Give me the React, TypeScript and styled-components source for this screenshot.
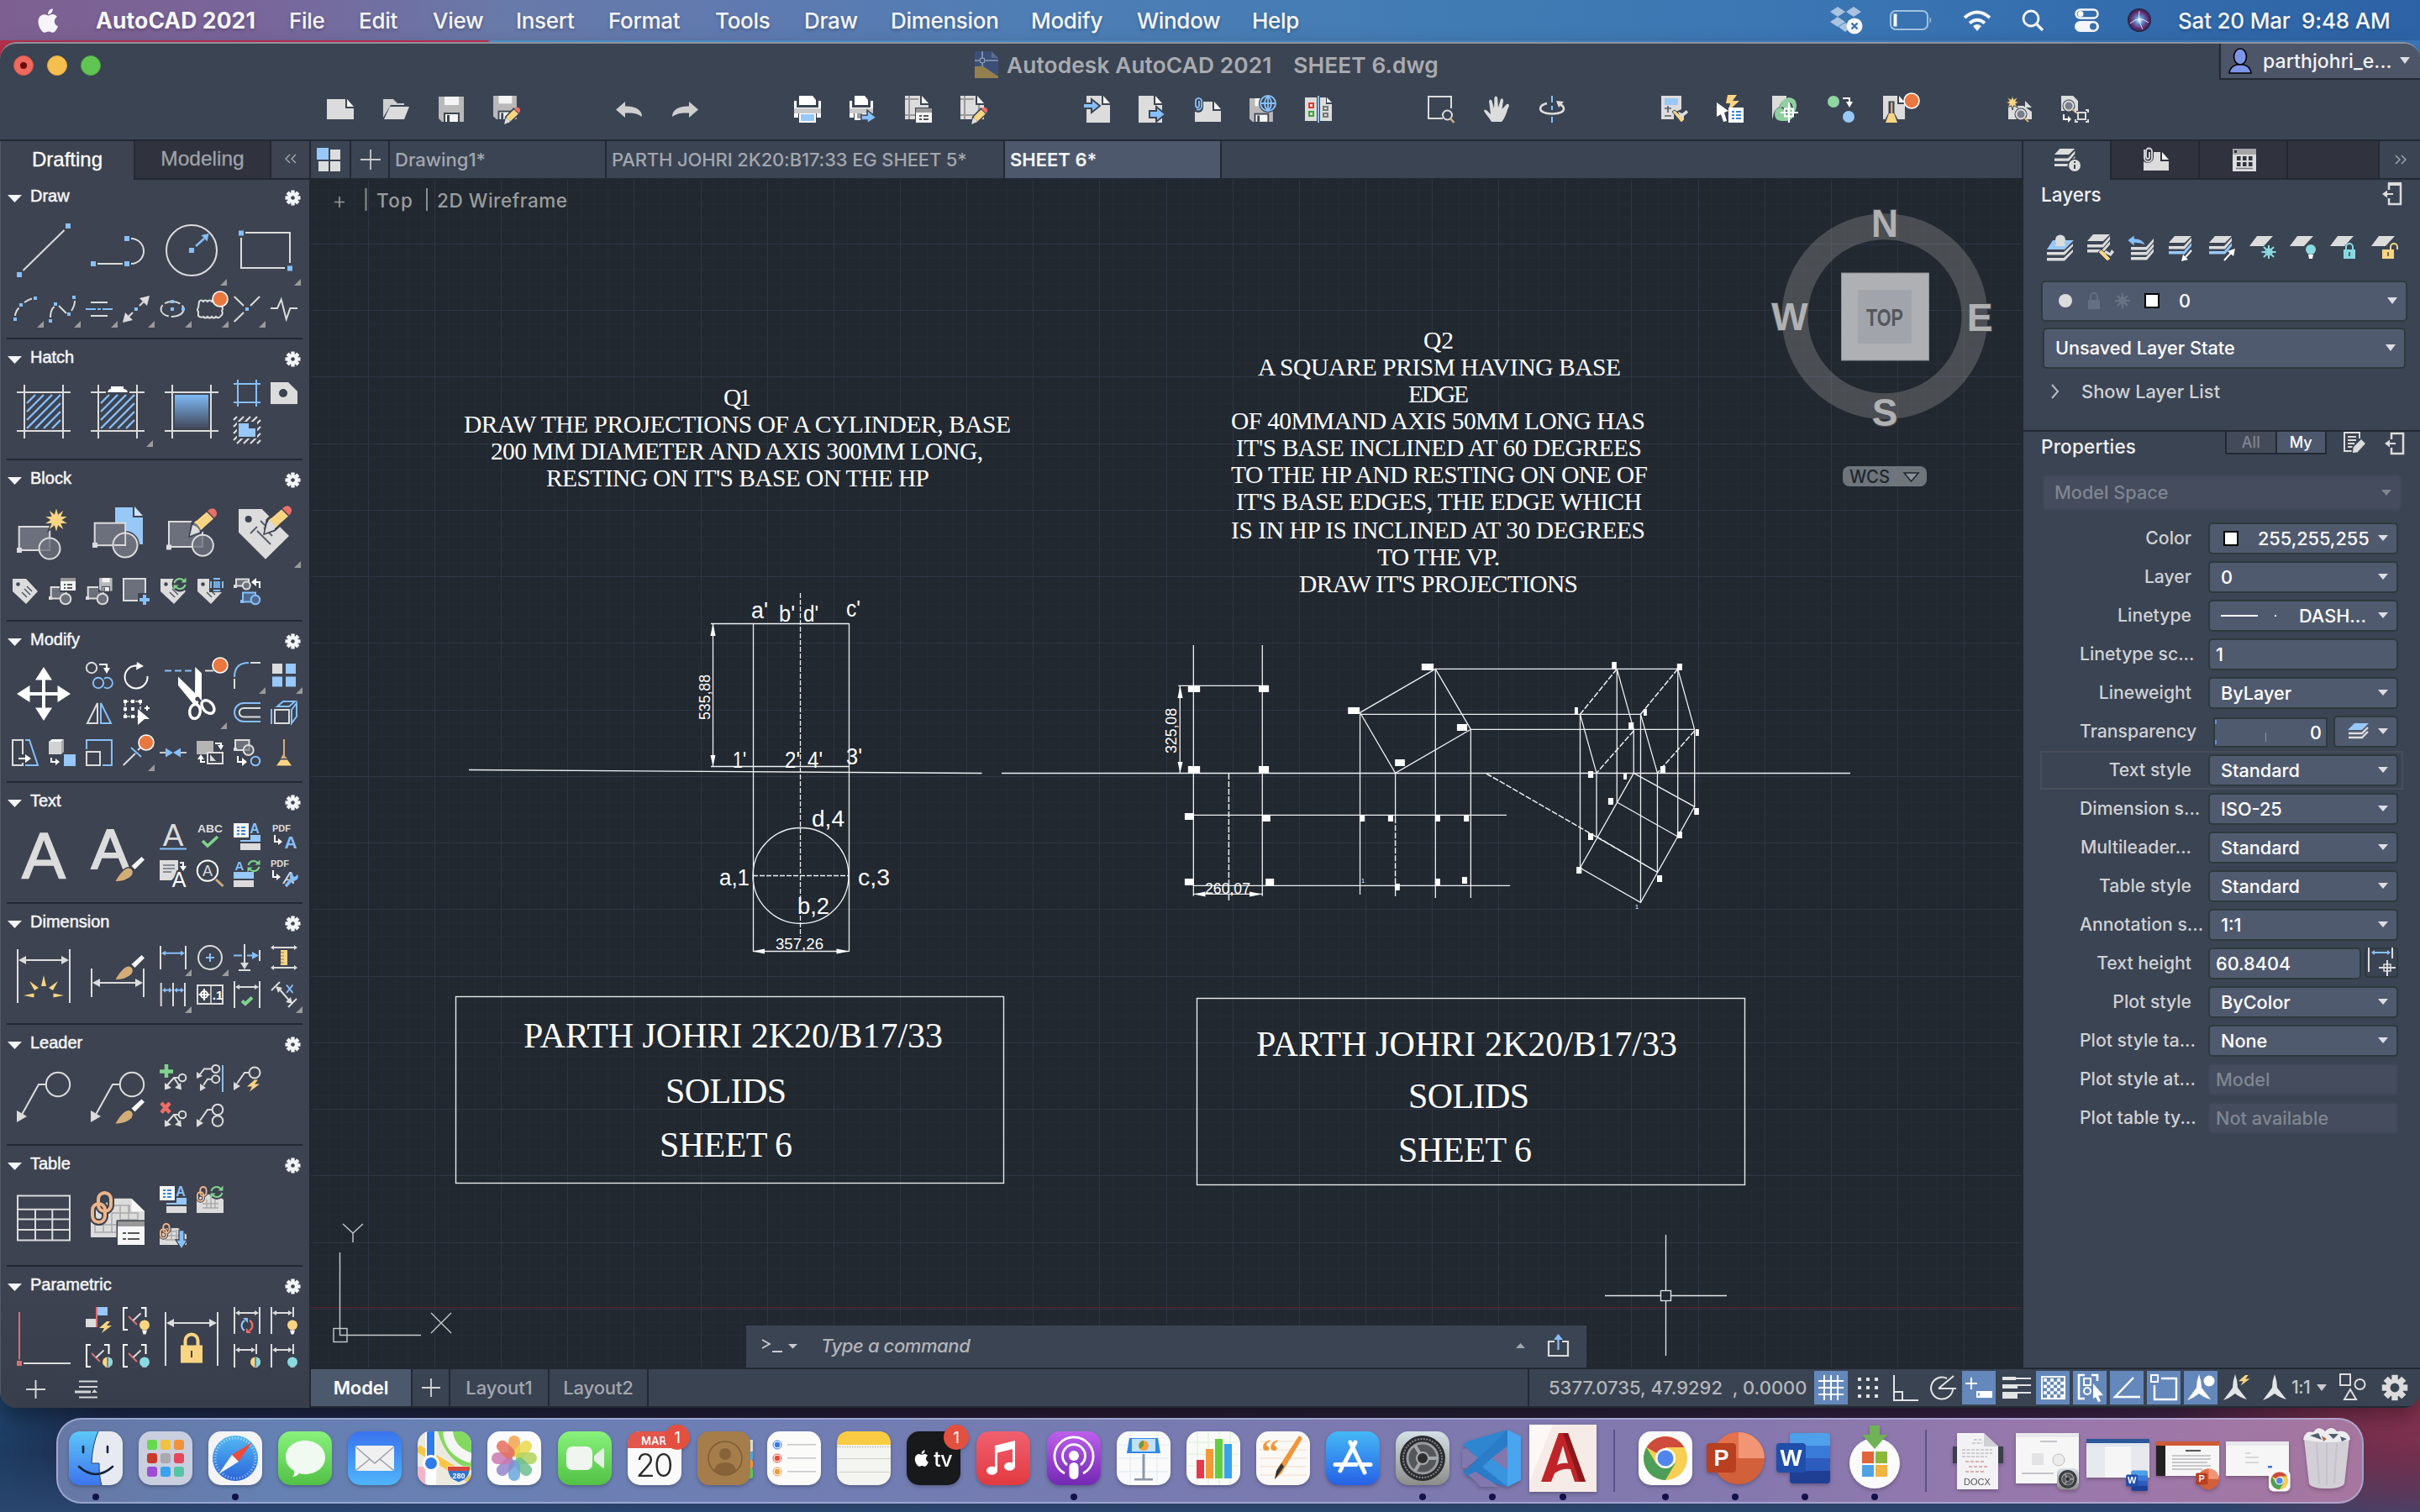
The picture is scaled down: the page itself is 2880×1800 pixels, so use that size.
import React from "react";
import styled, { createGlobalStyle } from "styled-components";

/* ---------- palette ---------- */
const G = "#dcdcdc";
const W = "#ffffff";
const BL = "#86bff9";
const LB = "#97c8f7";
const YE = "#f9d583";
const GR = "#7fd38c";
const OR = "#e97840";
const RD = "#ee6e68";
const CY = "#8ad9e0";
const TN = "#d3ad78";
const DK = "#3c4250";
const PALETTE = "#3d4350";
const PANEL = "#3b4453";
const EDGE = "#222933";
const ACTIVE = "#4e586d";
const UI = `Inter, "Liberation Sans", sans-serif`;
const ARIAL = `"Liberation Sans", Arial, sans-serif`;
const TIMES = `"Liberation Serif", "Times New Roman", serif`;

const GlobalStyle = createGlobalStyle`
  *, *::before, *::after { box-sizing: border-box; }
  html, body { margin: 0; padding: 0; }
  body { width: 2880px; height: 1800px; overflow: hidden; font-family: ${UI}; }
  svg { display: block; }
`;

/* ---------- drawing helpers ---------- */
type PathProps = { d: string; c?: string; w?: number; f?: string; dash?: string };
const P = ({ d, c = G, w = 2, f = "none", dash }: PathProps) => (
  <path d={d} stroke={c} strokeWidth={w} fill={f} strokeDasharray={dash} />
);
const F = ({ d, c = G }: { d: string; c?: string }) => <path d={d} fill={c} />;
const R = ({ x, y, w = 6, h, c = BL }: { x: number; y: number; w?: number; h?: number; c?: string }) => (
  <rect x={x} y={y} width={w} height={h ?? w} fill={c} />
);
const C = ({ x, y, r, c = "none", s, w = 2 }: { x: number; y: number; r: number; c?: string; s?: string; w?: number }) => (
  <circle cx={x} cy={y} r={r} fill={c} stroke={s} strokeWidth={s ? w : 0} />
);
const T = ({ x, y, s, c = G, b = 400, children, a = "start", i = false, l, ff = ARIAL }: any) => (
  <text x={x} y={y} fontSize={s} fill={c} fontWeight={b} textAnchor={a} fontFamily={ff} fontStyle={i ? "italic" : "normal"}
    textLength={l} lengthAdjust={l ? "spacingAndGlyphs" : undefined}>{children}</text>
);
const DimH = ({ x1, x2, y, c = G, h = 4, k = 3 }: any) => (
  <g>
    <P d={`M${x1 + h} ${y}H${x2 - h}`} c={c} />
    <F d={`M${x1} ${y}l${h} ${-k}v${2 * k}zM${x2} ${y}l${-h} ${-k}v${2 * k}z`} c={c} />
  </g>
);
const Badge = ({ x, y }: { x: number; y: number }) => <circle cx={x} cy={y} r={9} fill={OR} stroke={W} strokeWidth={1.6} />;
const Pencil = ({ t = "" }: { t?: string }) => (
  <g transform={t}>
    <path d="M30 36L33 20L49 4.500Q56 -1 62 5Q65 11 58 17L42 32Z" fill="none" stroke={PALETTE} strokeWidth={3} />
    <F d="M30 36L33 23Q40 24 42 31.500Z" c={G} />
    <F d="M35 20.500L50 7.500L58 15.500L43 29Q40 22 35 20.500Z" c={YE} />
    <F d="M51 6.500Q55 1.500 59.500 4Q65 9 59 14.500Z" c={RD} />
  </g>
);
const Brush = ({ t }: { t: string }) => (
  <g transform={t}>
    <path d="M28 64Q39 45 47 47Q53 50 49 57Q42 64 28 64Z" fill={TN} stroke={PALETTE} strokeWidth={1.500} />
    <F d="M48.500 45L60.500 34L64 37.500L52.500 49Z" c={"#f5f5f5"} />
  </g>
);
const Floppy = ({ t }: { t?: string }) => (
  <g transform={t}>
    <F d="M0 0H30V30H4L0 26Z" c="#b9b9b9" />
    <R x={7} y={0} w={17} h={10} c="#f4f4f4" />
    <R x={6} y={19} w={19} h={11} c={PANEL} />
    <R x={8} y={21} w={15} h={9} c="#f4f4f4" />
    <R x={10} y={22} w={3} h={8} c={PANEL} />
  </g>
);
const Refresh = ({ x, y, r = 6.5, c = GR, c2 }: any) => (
  <g>
    <P d={`M${x - r} ${y - 1}A${r} ${r} 0 0 1 ${x + r - 2} ${y - 4}`} c={c} />
    <F d={`M${x + r + 1} ${y - r - 1}v6h-6z`} c={c} />
    <P d={`M${x + r} ${y + 1}A${r} ${r} 0 0 1 ${x - r + 2} ${y + 4}`} c={c2 ?? c} />
    <F d={`M${x - r - 1} ${y + r + 1}v-6h6z`} c={c2 ?? c} />
  </g>
);
const Bolt = ({ t = "", c = YE }: any) => <path transform={t} d="M9 0L0 8H6L3 14L15 5H9L13 0Z" fill={c} />;
const ListCard = () => (
  <g>
    <R x={0} y={0} w={18} h={17} c="#f5f5f5" />
    <P d="M4 5H7M9 5H14M4 9H7M9 9H14M4 13H7M9 13H14" c="#3a80d8" w={2} />
  </g>
);
const Tag = () => (
  <g>
    <F d="M1 1H17L31 16L17 31L1 16Z" />
    <C x={7.5} y={7.500} r={2.200} c={DK} />
    <P d="M12 17L18 23M15 13L22 20M18 10L24 16" c="#555a66" w={1.500} />
  </g>
);
const Bulb = ({ x, y, c, half }: any) => (
  <g>
    <C x={x} y={y} r={6} c={c} />
    {half && <F d={`M${x} ${y - 6}A6 6 0 0 1 ${x} ${y + 6}Z`} c={CY} />}
    {half && <P d={`M${x} ${y - 6}V${y + 6}`} c={PALETTE} w={1} />}
    <F d={`M${x - 3} ${y + 6}h6l-1.500 5h-3z`} c="#f5f5f5" />
  </g>
);
const star = (cx: number, cy: number, R1: number, R2: number, n: number) =>
  Array.from({ length: n * 2 }, (_, i) => {
    const a = (Math.PI * i) / n - Math.PI / 2;
    const r = i % 2 ? R2 : R1;
    return `${(cx + r * Math.cos(a)).toFixed(1)},${(cy + r * Math.sin(a)).toFixed(1)}`;
  }).join(" ");
const LeaderTwin = () => (
  <g>
    <C x={27} y={15} r={4.300} s={G} />
    <P d="M22.500 15H17L9 24M17 15L23 24" />
    <F d="M6 29.500V21L14 27ZM26 29.500L18 27L25 21Z" />
  </g>
);
const Chain = ({ k = 1 }: { k?: number }) => (
  <g transform={`scale(${k})`} fill="none" strokeWidth={4}>
    <rect x={9} y={2} width={15} height={22} rx={7.500} stroke={PALETTE} strokeWidth={8} />
    <rect x={2} y={15} width={15} height={22} rx={7.500} stroke={PALETTE} strokeWidth={8} />
    <rect x={9} y={2} width={15} height={22} rx={7.500} stroke="#eeb58a" />
    <rect x={2} y={15} width={15} height={22} rx={7.500} stroke="#eeb58a" />
  </g>
);
const HatchFrame = () => <P d="M9 0V64M55 0V64M0 9H64M0 55H64" />;
const DiagFill = () => (
  <path
    d="M12 22L22 12M12 32L32 12M12 42L42 12M12 52L52 12M22 52L52 22M32 52L52 32M42 52L52 42"
    stroke={BL} strokeWidth={2.400} fill="none" />
);

/* ---------- palette tool icons (64 grid for large, 32 for small) ---------- */
const tools: Record<string, React.ReactNode> = {
  line: <><R x={0} y={58} /><R x={58} y={0} /><P d="M7.500 56L56.500 8" /></>,
  polyline: <><R x={0} y={45} /><R x={40} y={45} /><R x={40} y={15} /><P d="M8 48H38M48 18A15 15 0 0 1 48 48" /></>,
  circle: <><C x={32} y={32} r={30} s={G} /><R x={29} y={29} /><P d="M37 27L47 18" c={BL} w={2.500} /><F d="M52.500 12L50.500 21.500L43.500 14Z" c={BL} /></>,
  rect: <><R x={0} y={8.5} /><R x={58} y={50.5} /><P d="M8 11H61V47M3 17V53H55" /></>,
  arc: <><R x={2} y={26} w={4} /><R x={9} y={9} w={4} /><R x={26} y={1} w={4} /><P d="M4 24Q4.500 18.500 8.500 14.500M15 8Q20 4.500 24 3.500" /></>,
  spline: <><R x={0} y={28} w={4} /><R x={6} y={8} w={4} /><R x={22} y={20} w={4} /><R x={28} y={0} w={4} /><P d="M2 26Q2 17 6.500 13M12 12L21 21M27 18Q31 12 31 6" /></>,
  xline: <><P d="M6 8H26M6 24H26" /><P d="M0 16H12M14 16H18M20 16H32" c={BL} /></>,
  ray: <><P d="M6 26L12 20M20 12L26 6" /><F d="M0 32L3 20L12 29ZM32 0L29 12L20 3Z" /><R x={14} y={14} w={4} /></>,
  ellipse: <><ellipse cx={15} cy={16} rx={13.500} ry={9} fill="none" stroke={G} strokeWidth={2} strokeDasharray="19 3" /><R x={13} y={5} w={4} /><R x={13} y={14} w={4} /><R x={26} y={14} w={4} /></>,
  cloud: <><path d="M3 7q2.500-3 5 0q2.500-3 5 0q2.500-3 5 0q2.500-3 5 0q3-3 7 1v5q2 2 0 5q2 3-1 6q-3 4-6 1q-2.500 3-5 0q-2.500 3-5 0q-2.500 3-5 0q-3 2-6-1v-5q-2-2 0-5z" fill="none" stroke={G} strokeWidth={2} /><Badge x={28} y={4} /></>,
  point: <><P d="M.700 1L12 12M20 12L31 1M.700 31L12 20" /><R x={14} y={14} w={4} /></>,
  helix: <P d="M0 15H8L12.700 4.500L18.700 28L23.300 15H32" />,

  hatch: <><HatchFrame /><DiagFill /></>,
  hatchEdit: <><HatchFrame /><DiagFill /><rect x={18} y={6} width={28} height={5} fill={PALETTE} /><F d="M20 9Q21 5 24 5V2H39V5Q43 5 44 9Z" c={W} /></>,
  gradient: <><HatchFrame /><defs><linearGradient id="gh" x1="0" y1="0" x2="0" y2="1"><stop offset="0" stopColor="#7db9f5" /><stop offset="1" stopColor="#42485a" /></linearGradient></defs><rect x={12} y={12} width={40} height={40} fill="url(#gh)" /></>,
  boundary: <P d="M5 0V32M27 0V32M0 5H32M0 27H32" c={BL} />,
  wipeout: <><F d="M0 3H21L32 14V29H0Z" /><C x={15} y={16} r={5} c={DK} /></>,
  region: <><path d="M0 4L4 0M0 12L12 0M0 20L20 0M0 28L28 0M4 32L32 4M12 32L32 12M20 32L32 20M28 32L32 28" stroke={G} strokeWidth={2.200} /><rect x={4} y={6} width={24} height={20} fill={PALETTE} /><F d="M6 8H18V14H26V24H6Z" c={LB} /></>,

  createBlock: <><rect x={2.700} y={25} width={36.500} height={28} fill="#6c707c" stroke={G} strokeWidth={2} /><R x={0} y={50} c={G} /><C x={39} y={51} r={12.500} c="#6c707ccc" s={G} /><polygon points={star(47, 17, 16.5, 8, 10)} fill={YE} stroke={PALETTE} strokeWidth={1.500} /></>,
  insertBlock: <><F d="M29 2H51L62 13V46H29Z" c={LB} /><F d="M52 1L62 12H52Z" c="#cfe3f7" /><path d="M51 2V13H62" fill="none" stroke={PALETTE} strokeWidth={2} /><C x={41} y={47} r={17} c={PALETTE} /><rect x={4.700} y={20.700} width={36.500} height={26.500} fill="#6c707c" stroke={G} strokeWidth={2} /><R x={2} y={44} c={G} /><C x={41} y={47} r={14.500} c="#6c707c" s={G} /><P d="M41.200 33V47H28" w={1.800} /></>,
  editBlock: <><rect x={5} y={19} width={40} height={30} fill="#6c707c" stroke={G} strokeWidth={2} /><R x={2} y={46.5} c={G} /><C x={45.3} y={47.2} r={12.5} c="#6c707ccc" s={G} /><Pencil /></>,
  editAttr: <><F d="M0 4H27.700L60 36L32 63.700L0 31.700Z" /><C x={11.7} y={16} r={4} c={DK} /><P d="M14 33L22 25M22 30L38 46M30 26L40 36M26 18L34 26" c="#5a5f6b" w={2} /><Pencil t="translate(1 -3)" /></>,
  tag: <Tag />,
  blockList: <><rect x={2.700} y={11} width={18} height={13.500} fill="#6c707c" stroke={G} strokeWidth={2} /><R x={0} y={22} w={4} c={G} /><C x={20} y={25} r={6.3} c="#6c707c" s={G} /><rect x={13} y={0} width={20} height={17} fill={PALETTE} /><R x={14} y={0} w={18} h={15} c="#f5f5f5" /><R x={14} y={0} w={18} h={4} c="#999" /><P d="M18 8H20M22 8H28M18 12H20M22 12H28" c="#555" /></>,
  blockSave: <><rect x={2.700} y={11} width={18} height={13.500} fill="#6c707c" stroke={G} strokeWidth={2} /><R x={0} y={22} w={4} c={G} /><C x={20} y={25} r={6.3} c="#6c707c" s={G} /><rect x={15} y={0} width={18} height={17} fill={PALETTE} /><Floppy t="translate(16 0) scale(.520)" /></>,
  blockAdd: <><rect x={1} y={1} width={26} height={26} fill="#6c707c" stroke={G} strokeWidth={2} /><rect x={18} y={18} width={16} height={16} fill={PALETTE} /><P d="M26 20V32M20 26H32" c={BL} w={4} /></>,
  tagSync: <><Tag /><C x={24} y={7} r={9.500} c={PALETTE} /><Refresh x={24} y={7} /></>,
  tagArea: <><Tag /><R x={15} y={-1} w={18} h={18} c={PALETTE} /><R x={20} y={4} w={8} h={8} c="#6fa8e0" /><P d="M20 1H28M20 15H28M17 4V12M31 4V12" c={BL} /></>,
  blockSwap: <><rect x={3} y={1.500} width={15} height={8} fill="#6c707c" stroke={G} strokeWidth={2} /><R x={0} y={8} w={4} c={G} /><C x={15.3} y={9} r={4.500} c="#6c707c" s={G} /><P d="M31 12V5H26" c={W} /><F d="M21 5L27 0V10Z" c={W} /><rect x={11} y={17.500} width={15} height={11} fill="#4f6a90" stroke={BL} strokeWidth={2} /><R x={8} y={26} w={4} /><C x={26} y={26} r={5.3} c="#4f6a90" s={BL} /></>,

  move: <><R x={30} y={12} w={4} h={40} c={W} /><R x={12} y={30} w={40} h={4} c={W} /><F d="M32 0L42 15.500H22ZM32 64L42 48.500H22ZM0 32L15.500 22V42ZM64 32L48.500 22V42Z" c={W} /></>,
  copy: <><C x={7} y={7} r={6.200} s={G} /><P d="M16 3H25V8" c={W} /><F d="M25 14L21 7H29Z" c={W} /><C x={15} y={25} r={6.2} s={BL} /><P d="M22 20A6.200 6.200 0 1 1 22 30" c={BL} /></>,
  rotate: <><P d="M29.500 17A13.500 13.500 0 1 1 17 4.500" c={W} /><F d="M17 0L25 5L16 9.500Z" c={W} /></>,
  mirror: <><P d="M14 5V29H2Z" /><P d="M18 5V29H30Z" c={BL} /></>,
  pick: <><P d="M3 3H21V21H3Z" c={G} dash="4 2" w={1.600} /><R x={1} y={1} w={4} c={W} /><R x={10} y={1} w={4} c={W} /><R x={19} y={1} w={4} c={W} /><R x={1} y={10} w={4} c={W} /><R x={10} y={10} w={4} c={W} /><R x={1} y={19} w={4} c={W} /><R x={10} y={19} w={4} c={W} /><F d="M18 12L32 24H26L18 31Z" c={W} /><P d="M29 8V14M26 11H32" c={W} /></>,
  trim: <><P d="M0 4.500H8M12 4.500H20M24 4.500H32" c={BL} /><P d="M48 4.500H58" /><F d="M36.300 0L44 7.500V40L36 33Z" c={W} /><F d="M16 11.500L40 35V44H34L16 22Z" c={W} /><ellipse cx={36} cy={53} rx={6.300} ry={8.500} fill="none" stroke={W} strokeWidth={3.400} transform="rotate(8 36 53)" /><ellipse cx={51.500} cy={47.500} rx={6} ry={9} fill="none" stroke={W} strokeWidth={3.400} transform="rotate(-42 51.500 47.500)" /><C x={39} y={38} r={2.600} c={DK} /><Badge x={66} y={-2} /></>,
  fillet: <><P d="M1 18Q1 1 18 1" c={BL} /><P d="M20 1H32M1 20V32" c={G} /></>,
  array: <><R x={2} y={2} w={12} c={G} /><R x={18} y={2} w={12} c={LB} /><R x={2} y={17.5} w={12} c={LB} /><R x={18} y={17.5} w={12} c={LB} /></>,
  offset: <><P d="M32 5H12A11 11 0 0 0 12 27H32" c={BL} /><P d="M32 11H12A5 5 0 0 0 12 21.500H32" /></>,
  box: <><rect x={5} y={13} width={17} height={16} fill="none" stroke={G} strokeWidth={2} /><P d="M1 12V30" c={BL} /><P d="M8 9L15 3H29L22 9ZM25 13L31 5V21L25 29Z" c={BL} /></>,
  stretch: <><P d="M13 18V1H1V31H13V28" /><P d="M8 23H18" c={W} /><F d="M23 23L16 18V28Z" c={W} /><P d="M16 1H21L31 31H16" c={BL} /></>,
  explode: <><F d="M0 3L4 0H18L15 3Z" c="#f5f5f5" /><R x={0} y={3} w={15} h={15} c="#d2d2d2" /><F d="M15 3L18 0V15L15 18Z" c="#aaa" /><R x={18} y={18} w={14} c={LB} /><P d="M3 22V27H8" c={W} /><F d="M13 27L8 23V31Z" c={W} /></>,
  scale: <><P d="M1 12V1H31V31H20" c={BL} /><rect x={1} y={15} width={16} height={16} fill="none" stroke={G} strokeWidth={2} /></>,
  breakAt: <><P d="M.700 31L15 17M18 13L22 9" /><P d="M10 10L22 21" c={BL} /><Badge x={28} y={4} /></>,
  join: <><P d="M0 16H32" c="#c9c9c9" /><R x={14} y={10} w={4} h={12} c={PALETTE} /><F d="M7 10.500L16 16L7 21.500ZM25 10.500L16 16L25 21.500Z" c={BL} /></>,
  layerUp: <><R x={0} y={2} w={20} h={16} c="#b5b5b5" /><rect x={12} y={15} width={20} height={15} fill={PALETTE} /><rect x={13} y={16} width={18} height={13} fill="none" stroke={G} strokeWidth={2} /><F d="M16 18L23 26H16Z" /><P d="M22 5H29V8" c={W} /><F d="M29 13L25 7H32Z" c={W} /><P d="M10 27H5V24" c={W} /><F d="M5 18L1 24H9Z" c={W} /></>,
  blockConv: <><rect x={2} y={1} width={16.500} height={12} fill="#6c707c" stroke={G} strokeWidth={2} /><R x={0} y={10} w={4} c={G} /><C x={17.700} y={13} r={6} c="#6c707caa" s={G} /><P d="M5 20V27H11" c={W} /><F d="M16 27L10 22V32Z" c={W} /><C x={26} y={26} r={5.300} s={BL} /></>,
  purge: <><R x={15} y={0} w={2} h={21} c={TN} /><F d="M15 18L20 23H12Z" c={TN} /><F d="M12 24.500H20L25 31.500H7Z" c={YE} /></>,

  textA: <T x={32} y={60} s={78} c={G} a="middle"><tspan stroke={G} strokeWidth={1.500}>A</tspan></T>,
  textBrush: <><T x={23} y={48} s={67} a="middle"><tspan stroke={G} strokeWidth={2}>A</tspan></T><Brush t="translate(0 0)" /></>,
  textLine: <><T x={16} y={27} s={37} a="middle">A</T><R x={0} y={29.5} w={32} h={2} /></>,
  spell: <><T x={16} y={11} s={13} b={700} a="middle" l={30}>ABC</T><P d="M7 21L13 27L25 16" c={GR} w={3.600} /></>,
  textStyle: <><ListCard /><T x={25} y={12} s={16} c={BL} b={700} a="middle">A</T><R x={8} y={20} w={24} h={2} c={LB} /><R x={20} y={14} w={12} h={8} c={LB} /><R x={8} y={24} w={24} h={8} c={G} /></>,
  pdfText: <><T x={2} y={10} s={11} b={700} l={22}>PDF</T><P d="M5 14V22H10" c={W} /><F d="M14 22L9 18V26Z" c={W} /><T x={24} y={30} s={21} c={BL} b={700} a="middle">A</T></>,
  textNote: <><F d="M0 0H22V16L14 24H0Z" /><P d="M4 6H18M4 10H18M4 14H14" c="#6c707c" w={1.600} /><P d="M24 3H28V8" c={W} /><F d="M28 13L24 7H32Z" c={W} /><T x={23} y={32} s={25} c={PALETTE} a="middle"><tspan stroke={PALETTE} strokeWidth={4}>A</tspan></T><T x={23} y={32} s={25} c={W} a="middle">A</T></>,
  find: <><C x={13} y={12.6} r={12.2} s={W} /><T x={13} y={19} s={18} a="middle">A</T><P d="M23 23L31.500 31" c={TN} w={3} /></>,
  textSync: <><T x={7} y={11.500} s={15} c={BL} b={700} a="middle">A</T><Refresh x={24} y={7} /><R x={0} y={14} w={24} h={8} c={LB} /><R x={0} y={24} w={24} h={8} c={G} /></>,
  pdfTool: <><T x={0} y={8} s={11} b={700} l={22}>PDF</T><P d="M3 12V20H8" c={W} /><F d="M12 20L7 16V24Z" c={W} /><T x={22} y={28} s={21} a="middle" i>A</T><P d="M18 31L28 20" c={BL} w={3.600} /><F d="M32 17A5 5 0 1 1 26 15L27 19L29 20Z" c={BL} /></>,

  dimAuto: <><P d="M1 0V64M63 0V64" /><DimH x1={2} x2={62} y={13} h={9} k={5} /><F d="M32 31L35 44H29ZM15 38L26 46L21 49ZM49 38L38 46L43 49ZM8 55L20.500 52.500V57.500ZM56 55L43.500 52.500V57.500Z" c={YE} /></>,
  dimBrush: <><P d="M1 23V57M63 23V57" /><DimH x1={2} x2={62} y={40} h={9} k={5} /><Brush t="translate(0 -27)" /></>,
  dimLinear: <><P d="M1 2V30M31 2V30" /><DimH x1={2} x2={30} y={10.700} c={BL} h={5} /></>,
  dimCircle: <><C x={16} y={16} r={14} s={G} /><P d="M16 11V21M11 16H21" c={BL} /></>,
  dimOrd: <><P d="M13 0V22M6 31H20" /><F d="M13 30L8 22H18Z" /><P d="M0 13.500H10M16 13.500H24" c={BL} /><F d="M30 13.500L22 9V18Z" c={BL} /><P d="M31 7V20" /></>,
  dimRuler: <><DimH x1={0} x2={32} y={4} /><DimH x1={0} x2={32} y={28} /><R x={12} y={7} w={8} h={18} c={YE} /><P d="M12 10H16M12 14H16M12 18H16M12 22H16" c="#8a7a50" w={1.200} /></>,
  dimCont: <><P d="M1.700 2V30M16 2V30M30 2V30" /><DimH x1={3} x2={15} y={10.700} c={BL} h={4} /><DimH x1={17} x2={29} y={10.700} c={BL} h={4} /></>,
  tolerance: <><rect x={1} y={5} width={30} height={22} fill="none" stroke={G} strokeWidth={2} /><P d="M17 5V27" w={1.500} /><C x={9} y={16} r={4} s={W} /><P d="M9 9V23M2.500 16H15.500" c={W} /><T x={25} y={22} s={15} c={W} b={700} a="middle">.1</T></>,
  dimCheck: <><P d="M1 0V32M31 0V32" /><DimH x1={2} x2={30} y={7} h={5} /><P d="M10 23.500L14 27L22 19.500" c={GR} w={4} /></>,
  dimSpace: <><P d="M1 11L11 1M21 31L31 21" /><P d="M10 9L23 24" /><F d="M6 6L14 8L9 14ZM26 27L18 25L24 19Z" /><P d="M19 4.500L26.500 14M26.500 4.500L19 14" c={BL} /></>,

  leader: <><C x={49} y={17} r={14.2} s={G} /><P d="M35 17H26L6.500 52" /><F d="M0 62V48L12 55Z" /></>,
  leaderBrush: <><C x={49} y={17} r={14.2} s={G} /><P d="M35 17H26L6.500 52" /><F d="M0 62V48L12 55Z" /><Brush t="translate(0 .500)" /></>,
  leaderAdd: <><P d="M8 -1V15M0 7.500H16" c={GR} w={4.500} /><LeaderTwin /></>,
  leaderAlign: <><C x={22.700} y={4.500} r={4.500} s={G} /><C x={22.700} y={16.700} r={4.500} s={G} /><P d="M18 4.500H9L4 11M18 16.700H13L8 24" /><F d="M0 16V8L7 13ZM4 31V22L11 27Z" /><P d="M31 0V32" c={BL} /></>,
  leaderBolt: <><C x={25} y={9} r={6.500} s={G} /><P d="M18.500 9H13L4 22" /><F d="M0 30V20L8 25Z" /><Bolt t="translate(16 17.500)" /></>,
  leaderDel: <><P d="M2 1L12 12.500M12 1L2 12.500" c={RD} w={4.500} /><LeaderTwin /></>,
  leaderCollect: <><C x={25} y={9} r={6.300} s={G} /><C x={25} y={22.500} r={6.300} s={G} /><P d="M18.500 9H13L4 22" /><F d="M0 30V20L8 25Z" /></>,

  table: <><rect x={1} y={5.500} width={62} height={53} fill="none" stroke={G} strokeWidth={2} /><P d="M1 21.700H63M1 33.600H63M1 46H63M22 21.700V58.500M42.300 21.700V58.500" /></>,
  dataLink: <><F d="M0 24L28 8.700H48L64 24V55H0Z" /><F d="M48.700 8.700L64 24H48.700Z" c="#f7f7f7" /><P d="M5 35V49H36M15 40V49M5 40H40M25 26V49M35 17V36M45 17V36M25 17H46V26M25 26H56V34M35 34H56" c="#a9a9a9" w={1.500} /><Chain /><rect x={30.500} y={34.500} width={35} height={31} fill={PALETTE} /><R x={32} y={36} w={32} h={28} c="#f7f7f7" /><R x={32} y={36} w={32} h={6} c="#999" /><P d="M38 50H42M44 50H58M38 57H42M44 57H58" c="#555" w={2} /></>,
  linkSync: <><F d="M0 16L8 10H22L32 16V32H0Z" /><P d="M7 26H26M7 21H26M12 16V26M17 14V26M22 16V26" c="#a9a9a9" w={1.400} /><Chain k={0.480} /><C x={24} y={7} r={9} c={PALETTE} /><Refresh x={24} y={7} /></>,
  linkDown: <><F d="M0 16L8 6H22L32 14V26H0Z" /><P d="M7 20H24M7 15H24M7 10H20M14 6V20M20 8V20" c="#a9a9a9" w={1.400} /><Chain k={0.480} /><path d="M23 8.500H29V20H33L26 31L19 20H23Z" fill={BL} stroke={PALETTE} strokeWidth={1.300} /></>,

  perp: <><P d="M3 0V56.500" c="#d97078" /><R x={0} y={58} c="#d97078" /><P d="M8 61H64" /></>,
  autoCon: <><R x={14} y={0} w={12} h={10} c={LB} /><R x={0} y={14} w={12} h={10} c={G} /><R x={12} y={0} w={2} h={24} c="#d97078" /><Bolt t="translate(16 17)" /></>,
  conBulb: <><P d="M6 1H1V27H6M22 1H27.500V12" c={W} /><P d="M7 11L17 21" c="#d97078" /><P d="M12.500 16L21.500 7.500" /><Bulb x={26} y={21.5} c={YE} /></>,
  conHalf: <><P d="M6 1H1V27H6M22 1H27.500V12" c={W} /><P d="M7 11L17 21" c="#d97078" /><P d="M12.500 16L21.500 7.500" /><Bulb x={26} y={21.5} c={YE} half /></>,
  conCyan: <><P d="M6 1H1V27H6M22 1H27.500V12" c={W} /><P d="M7 11L17 21" c="#d97078" /><P d="M12.500 16L21.500 7.500" /><Bulb x={26} y={21.5} c={CY} /></>,
  dimLock: <><P d="M1 0V64M63 0V64" /><DimH x1={2} x2={62} y={13} h={9} k={5} /><rect x={19} y={39.500} width={26} height={21} fill={YE} /><path d="M24.500 40V34A7.500 7.500 0 0 1 39.500 34V40" fill="none" stroke={YE} strokeWidth={4} /><R x={31} y={46} w={2} h={8} c="#444" /></>,
  dimConv: <><P d="M1 0V32M31 0V32" /><DimH x1={2} x2={30} y={7} h={5} /><P d="M13 28A7 7 0 0 1 13 16" c={BL} w={2.200} /><P d="M19 16A7 7 0 0 1 19 28" c={RD} w={2.200} /><F d="M11 13H17V19Z" c={BL} /><F d="M21 31H15V25Z" c={RD} /></>,
  dimBulb: <><P d="M1 0V32M27 0V12" /><DimH x1={2} x2={26} y={7} h={5} /><Bulb x={26} y={21.5} c={YE} /></>,
  dimHalf: <><P d="M1 0V32M27 0V12" /><DimH x1={2} x2={26} y={7} h={5} /><Bulb x={26} y={21.5} c={YE} half /></>,
  dimCyan: <><P d="M1 0V32M27 0V12" /><DimH x1={2} x2={26} y={7} h={5} /><Bulb x={26} y={21.5} c={CY} /></>,
};

/* ---------- toolbar icons ---------- */
const PageShape = ({ x = 0, w = 32, y = 0, h = 32, c = G }: any) => (
  <g>
    <F d={`M${x} ${y}H${x + w - 10}V${y + 11}H${x + w}V${y + h}H${x}Z`} c={c} />
    <F d={`M${x + w - 8} ${y}L${x + w} ${y + 9}H${x + w - 8}Z`} c="#f5f5f5" />
  </g>
);
const SmallPencil = () => (
  <g transform="translate(-5.500 13) scale(.600)">
    <path d="M35 20.500L50 5L60 13L43 29L32 34Z" fill="none" stroke={PANEL} strokeWidth={5} />
    <F d="M31 35L34 22Q40 24 43 30Z" /><F d="M35 20.500L50 6L59 14L43 29Z" c={YE} /><F d="M51 5Q55 -1 61 3Q65 8 60 13Z" c={RD} />
  </g>
);
const bar: Record<string, React.ReactNode> = {
  new: <PageShape y={4} h={24} />,
  open: <><F d="M1 26V4H13L18 9H26V11H10Z" c="#cfcfcf" /><F d="M9 13H32L26 28H2Z" /></>,
  save: <Floppy t="translate(1 1)" />,
  saveAs: <><Floppy t="translate(0 0) scale(.930)" /><SmallPencil /></>,
  undo: <F d="M0 16.500L11 7V12.500C24 12 31 17 31 25C26 21 20 20 11 20.500V26Z" c="#cfcfcf" />,
  redo: <F d="M32 16.500L21 7V12.500C8 12 1 17 1 25C6 21 12 20 21 20.500V26Z" c="#cfcfcf" />,
  print: <><F d="M6 0H22L26 5V11H6Z" c={W} /><F d="M0 6H3V14H29V6H32V15H0Z" c={W} /><R x={0} y={15} w={32} h={6} c="#c9c9c9" /><F d="M0 21H5V26H0ZM27 21H32V26H27Z" c={W} /><R x={6} y={21} w={20} h={11} c={W} /><R x={8} y={22} w={16} h={8} c={LB} /></>,
  printTo: <><F d="M6 0H18L22 5V11H6Z" c={W} /><F d="M0 6H3V14H25V6H28V15H0Z" c={W} /><R x={0} y={15} w={28} h={6} c="#c9c9c9" /><R x={0} y={21} w={5} h={5} c={W} /><R x={6} y={21} w={16} h={8} c={W} /><R x={9} y={21} w={6} h={6} c="#9a9a9a" /><path d="M14 23H21V17L32 26L21 33V29H14Z" fill={BL} stroke={PANEL} strokeWidth={1.500} /></>,
  pageSetup: <><PageShape w={28} h={28} /><P d="M0 4H16M0 23H12M5 0V28" c="#9a9a9a" w={2} /><rect x={12} y={14} width={21} height={19} fill={PANEL} /><R x={13} y={15} w={19} h={17} c="#f7f7f7" /><R x={13} y={15} w={19} h={5} c="#999" /><P d="M17 24H20M22 24H28M17 28H20M22 28H28" c="#555" /></>,
  pageEdit: <><PageShape w={28} h={28} /><P d="M0 4H16M0 23H18M5 0V28M22 11V24" c="#9a9a9a" w={2} /><SmallPencil /></>,
  importDoc: <><PageShape x={4} w={28} /><path d="M0 9H10V4L20 12L10 20V15H0Z" fill={BL} stroke={PANEL} strokeWidth={2} /></>,
  exportDoc: <><PageShape w={28} /><path d="M13 18H21V13L32 22L21 31V26H13Z" fill={BL} stroke={PANEL} strokeWidth={2} /></>,
  attach: <><PageShape x={1} y={7} w={31} h={24} /><rect x={-1} y={-1} width={12} height={21} fill={PANEL} rx={6} /><P d="M6 6V12A2 2 0 0 1 2 12V5A4 4 0 0 1 9 5V13A4 4 0 0 1 3 16" c={BL} w={1.800} /></>,
  webSave: <><Floppy t="translate(0 3) scale(.930)" /><C x={22} y={9} r={11} c={PANEL} /><C x={22} y={9} r={9} s={BL} /><P d="M13 9H31M22 0V18M22 0Q14 9 22 18Q30 9 22 0" c={BL} w={1.800} /></>,
  compare: <><F d="M0 2H14V30H0Z" /><F d="M18 2H25V10H32V30H18Z" /><F d="M26 2L32 8H26Z" c="#f5f5f5" /><P d="M16 0V32" c={BL} /><rect x={5} y={9} width={5} height={5} fill="none" stroke="#e03a2c" strokeWidth={2} /><rect x={5} y={19} width={5} height={5} fill="none" stroke="#3ea23a" strokeWidth={2} /><rect x={22} y={13} width={5} height={4} fill="none" stroke="#777" strokeWidth={2} /><rect x={22} y={21} width={5} height={4} fill="none" stroke="#777" strokeWidth={2} /></>,
  zoomWin: <><P d="M18 27H1V1H28V15" /><C x={23.500} y={23} r={5.500} s={G} /><P d="M27 27L31.500 32" c={TN} w={2.600} /></>,
  pan: <path d="M10 31C8 27 3 22 1 18Q2 15 5 18L9 22L7 6Q9 3 10.500 6L13 15L13.500 2Q15 -1 17 2L18 14L21 4Q24 2 24 6L22.500 16L28 10Q31 9 31 12C28 18 27 26 22 31Z" fill={G} />,
  orbit: <><P d="M16 0V8M16 25V32" c={BL} /><P d="M16 12V17" c={BL} /><P d="M10 9Q2 11 2 15.500Q3 21 16 21.500Q30 21 30 15.500Q30 12 25 10" c={G} w={2.600} /><F d="M21 6L30 7L24 14Z" /></>,
  calc: <><F d="M0 0H24V16L15 20V28H0Z" /><R x={4} y={3} w={16} h={8} c={LB} /><P d="M4 15H12M8 12V20M4 24H12" c="#555a66" w={1.600} /><path d="M13 19L16 17L28 28L24 32Z" fill={YE} stroke={PANEL} strokeWidth={1} /><F d="M22 24L20 19L25 21L30 17L32 20L27 24V28Z" /></>,
  quick: <><path d="M13 0H24L19 7H27L14 19L16 10H11Z" transform="translate(0 -1)" fill={YE} /><F d="M0 8L14 18L9 20L12 30L8 31L5 22L0 25Z" c={W} /><R x={14} y={14} w={18} h={18} c={W} /><P d="M18 19H21M23 19H29M18 23H21M23 23H29M18 27H21M23 27H29" c="#3a80d8" /></>,
  cloudAdd: <><F d="M0 0H17V4Q10 6 9 13Q2 16 1 25L0 28Z" /><path d="M11 30Q3 29 3 22Q3 15 9 14Q11 3 20 2Q29 3 29 11Q29 17 26 20Q26 28 18 30Z" fill="#8fd0a0" /><P d="M11 14Q17 15 17 22M20 8Q24 10 24 16" c={PANEL} w={1.600} /><P d="M20 8V32M10 20H31" c={W} w={2.200} /><rect x={15} y={15.500} width={10} height={9} fill="none" stroke={W} strokeWidth={2} /></>,
  match: <><C x={7} y={7} r={7} c="#8fd6a0" /><C x={25} y={25} r={7} c={LB} /><P d="M18 3H26V8" c={W} /><F d="M26 14L22 7H30Z" c={W} /></>,
  purge: <><F d="M0 0H17V10H26V28H0Z" /><F d="M19 0L26 8H19Z" c="#f5f5f5" /><path d="M8 8H12V21L18 32H2L8 21Z" fill={PANEL} stroke={PANEL} strokeWidth={3} /><R x={9} y={8} w={2.4} h={13} c={TN} /><F d="M7 21H13L17 32H3Z" c={YE} /><Badge x={34} y={6} /></>,
  recover: <><F d="M3 12H21L31 19V28H3Z" /><F d="M23 6L31 14H23Z" c={G} /><polygon points={star(8, 8, 9, 4, 8)} fill={YE} stroke={PANEL} strokeWidth={1} /><C x={18} y={22} r={7.500} c={PANEL} /><C x={18} y={22} r={5.500} c="#777d89" s={G} /><P d="M22 26L27 31" c={TN} /></>,
  inspect: <><F d="M0 0H14L20 6V18H0Z" /><C x={9} y={12} r={7.500} c={PANEL} /><C x={9} y={12} r={5.500} c="#777d89" s={G} /><P d="M13 16L19 21" c={TN} /><P d="M3 22V28H8" c={W} /><F d="M12 28L8 24V32Z" c={W} /><P d="M17 20V17H20M29 17H32V20M32 28V31H29M20 31H17V28" w={2} /><rect x={20} y={20} width={9} height={8} fill="none" stroke={G} strokeWidth={2} /></>,
};

/* ---------- layer icons ---------- */
const Sheet = ({ y, c = G, x = 0 }: any) => <F d={`M${x + 7} ${y}H${x + 27}L${x + 19} ${y + 8}H${x}Z`} c={c} />;
const SheetEdge = ({ y, c = G, x = 0 }: any) => <F d={`M${x} ${y + 6}H${x + 18}L${x + 27} ${y - 4}V${y}L${x + 19} ${y + 9.500}H${x}Z`} c={c} />;
const layers: Record<string, React.ReactNode> = {
  current: <><F d="M7 7H32L21 18H0Z" c={LB} /><F d="M0 21H20L31 11V14L21 24.500H0ZM0 28H20L31 18V21L21 31.500H0Z" /><F d="M10 14Q10 9 16 9T22 14Z" c={G} /><C x={16} y={6.5} r={6} c={G} /></>,
  match: <><Sheet y={0} /><SheetEdge y={6} /><SheetEdge y={12} /><path d="M13 21L17 18L28 29L24 32Z" fill={YE} stroke={PANEL} /><F d="M20 22L22 19L27 22L29 18L32 21L28 26Z" /></>,
  prev: <><g transform="translate(4 5)"><SheetEdge y={4} /><SheetEdge y={10} /><SheetEdge y={16} /></g><path d="M0 7L8 1V5Q18 5 21 13Q16 10 8 10V14Z" fill={BL} stroke={PANEL} strokeWidth={0.600} /></>,
  isolate: <><Sheet y={2} /><SheetEdge y={8} /><SheetEdge y={14} c={LB} /><P d="M27 19L20 27" c={W} /><F d="M15 32L17 24L23 30Z" c={W} /></>,
  unisolate: <><Sheet y={2} /><SheetEdge y={8} /><SheetEdge y={14} c={LB} /><P d="M18 31L26 22" c={W} /><F d="M31 17L29 26L22 20Z" c={W} /></>,
  freeze: <><F d="M9 2H28L17 14H0Z" /><P d="M23 13V29M14.500 21H31.500M17 15L29 27M29 15L17 27" c={CY} w={2} /><C x={23} y={21} r={4} s={CY} w={1.500} /></>,
  off: <><F d="M9 2H28L17 14H0Z" /><C x={25} y={18} r={6} c={CY} /><F d="M22 24H28L27 29H23Z" c="#f5f5f5" /></>,
  lock: <><F d="M9 2H28L17 14H0Z" /><R x={16} y={18} w={14} h={11} c={CY} /><P d="M19 18V15A4 4 0 0 1 27 15V18" c={CY} /><R x={22} y={21} w={2} h={5} c="#3f6f78" /></>,
  unlock: <><F d="M9 2H28L17 14H0Z" /><R x={13} y={18} w={14} h={11} c={YE} /><P d="M23 18V15A4 4 0 0 1 31 15V18" c={YE} /><R x={19} y={21} w={2} h={5} c="#7a6a40" /></>,
};

/* ---------- layout ---------- */
const Desktop = styled.div`
  width: 2880px; height: 1800px; display: flex; flex-direction: column; overflow: hidden;
  background:
    linear-gradient(90deg, #b8304c 0, #c2304e 580px, #4f97d2 584px, #3a78bd 100%) 0 48px / 100% 24px no-repeat,
    radial-gradient(ellipse 300px 240px at 100% 1640px, #8e3350 0, rgba(110,40,80,0) 100%),
    linear-gradient(180deg, rgba(30,40,70,0) 1680px, rgba(30,42,72,.2) 1730px, #2a466f 1800px),
    linear-gradient(90deg, #1d4168 0, #1c2a4c 120px, #201f3a 700px, #2a1b35 1300px, #241f36 1700px, #3a2144 2500px, #55294a 2880px);
`;
const MenuBar = styled.header`
  height: 48px; flex: none; display: flex; align-items: center; padding: 0 38px 0 44px; justify-content: space-between;
  background: linear-gradient(90deg, #7d6091 0, #79659a 300px, #687aa9 600px, #5f7ab0 900px, #4f7eb5 1200px, #427cb4 1700px, #3a75b3 2200px, #2d63a6 2880px);
  color: #f6f6fa; text-shadow: 0 2px 4px rgba(0,0,0,.25);
`;
const MenuGroup = styled.nav`display: flex; align-items: center; height: 48px;`;
const MenuItem = styled.span<{ $w: number; $bold?: boolean; $ls?: number }>`
  width: ${p => p.$w}px; white-space: pre; font: ${p => (p.$bold ? 700 : 500)} ${p => (p.$bold ? 26.500 : 26)}px ${UI}; letter-spacing: ${p => p.$ls ?? -0.3}px;
`;
const StatusSlot = styled.span<{ $w: number }>`width: ${p => p.$w}px; display: flex; align-items: center;`;
const Window = styled.main`
  margin-top: 2px; height: 1626px; flex: none; border-radius: 20px; overflow: hidden; display: flex; flex-direction: column;
  background: ${PANEL}; border-top: 2px solid #8d939c; box-shadow: 0 10px 24px rgba(0,0,0,.35);
`;
const TitleRow = styled.div`height: 42px; flex: none; display: grid; grid-template-columns: 1160px 1fr 239px; `;
const Lights = styled.div`display: flex; gap: 16px; padding: 14px 0 0 16px;`;
const Light = styled.span<{ $c: string; $e: string }>`
  width: 24px; height: 24px; border-radius: 50%; background: ${p => p.$c}; border: 1px solid ${p => p.$e};
  display: flex; align-items: center; justify-content: center;
  i { width: 8px; height: 8px; border-radius: 50%; background: #6b0b07; }
`;
const Title = styled.h1`
  margin: 0; display: flex; align-items: center; height: 50px; color: #a9abb0; font: 600 26.300px ${UI}; white-space: pre; letter-spacing: .100px;
  svg { margin-right: 10px; }
  span { margin-left: 26px; }
`;
const Account = styled.div`
  height: 43px; display: flex; align-items: center; background: #4d5569; border-left: 2px solid ${EDGE}; border-bottom: 2px solid ${EDGE};
  padding-left: 8px; color: #f2f3f5; font: 500 23px ${UI}; letter-spacing: .100px;
  svg:first-child { margin-right: 12px; }
  svg:last-child { margin: -2px 0 0 9px; }
`;
const Toolbar = styled.div`
  height: 74px; flex: none; display: flex; gap: 114px; padding: 20px 0 0 389px; border-bottom: 2px solid ${EDGE};
`;
const ToolGroup = styled.div`display: flex; gap: 34px; svg { width: 32px; height: 32px; overflow: visible; }`;
const Body = styled.div`flex: 1; min-height: 0; display: grid; grid-template-columns: 368px 2512px;`;
const Workspace = styled.div`display: flex; flex-direction: column; min-height: 0; min-width: 0;`;
const WorkRow = styled.div`display: grid; grid-template-columns: 2040px 472px; height: 1460px; flex: none;`;

const Palette = styled.aside`
  background: ${PALETTE}; display: flex; flex-direction: column; min-height: 0; border-left: 1px solid #525967;
  background-image: linear-gradient(180deg, transparent 1360px, #383e4b 1500px);
`;
const PaletteTabs = styled.div`height: 46px; flex: none; display: grid; grid-template-columns: 158px 164px 45px; font: 24px ${ARIAL};`;
const PaletteTab = styled.div<{ $kind: "on" | "off" | "fold" }>`
  display: flex; align-items: center; justify-content: center; padding-bottom: 3px; -webkit-text-stroke: .300px;
  color: ${p => (p.$kind === "on" ? "#fff" : "#9fa2a8")};
  ${p => p.$kind === "off" && `background: #30333e; border-left: 2px solid ${EDGE}; border-right: 2px solid ${EDGE};`}
  ${p => p.$kind !== "on" && `border-bottom: 2px solid ${EDGE};`}
  font-size: ${p => (p.$kind === "on" ? 24 : 24.500)}px;
`;
const PaletteScroll = styled.div`flex: none; height: 1414px; overflow: hidden;`;
const Section = styled.section<{ $h: number }>`
  height: ${p => p.$h}px; margin: 0 8px 0 7px; border-bottom: 2px solid ${EDGE};
`;
const SectionHead = styled.h2<{ $first?: boolean }>`
  margin: 0; height: ${p => (p.$first ? 40 : 42)}px; padding-top: ${p => (p.$first ? 2 : 4)}px; display: flex; align-items: center; color: #f4f5f7;
  font: 400 20px ${ARIAL}; -webkit-text-stroke: .500px; padding-left: 1px;
  svg:first-child { margin: 3px 10px 0 0; }
  span { flex: 1; margin-top: -3px; }
  svg:last-child { margin: 1px 2px 0 0; }
`;
const ToolGrid = styled.div`display: grid; grid-template-columns: repeat(8, 44px); grid-auto-rows: 44px;`;
const SubGrid = styled(ToolGrid)`margin-top: 4px;`;
const ToolCell = styled.div<{ $big?: boolean; $col?: number; $row?: number; $arrow?: boolean }>`
  ${p => p.$big ? `grid-column: ${p.$col} / span 2; grid-row: 1 / span 2;` : p.$col ? `grid-column: ${p.$col}; grid-row: ${p.$row};` : ""}
  display: flex; align-items: center; justify-content: center; position: relative;
  svg { overflow: visible; }
  ${p => p.$arrow && `&::after { content: ""; position: absolute; right: ${p.$big ? 2 : 0}px; bottom: ${p.$big ? 2 : 0}px;
    border-left: 8px solid transparent; border-bottom: 8px solid #9b9b9b; }`}
`;
const PaletteFoot = styled.div`flex: 1; display: flex; align-items: center; gap: 35px; padding: 4px 0 0 30px;`;

const Center = styled.div`display: flex; flex-direction: column; border-left: 2px solid ${EDGE}; border-right: 2px solid ${EDGE}; min-height: 0;`;
const DocTabs = styled.div`height: 46px; flex: none; display: flex; border-bottom: 2px solid ${EDGE}; background: ${PANEL};`;
const DocTab = styled.div<{ $w: number; $on?: boolean; $ls?: number }>`
  width: ${p => p.$w}px; border-right: 2px solid ${EDGE}; display: flex; align-items: center; padding: 0 0 1px 6px; white-space: pre;
  background: ${p => (p.$on ? ACTIVE : "transparent")}; color: ${p => (p.$on ? "#f7f8fa" : "#a3a7ae")};
  font: ${p => (p.$on ? 600 : 500)} 22px ${UI}; letter-spacing: ${p => p.$ls ?? 0}px;
`;
const Canvas = styled.div`flex: none; height: 1414px; position: relative; background: #212830; overflow: hidden;`;
const CommandBar = styled.div`
  position: absolute; left: 518px; bottom: 0; width: 1000px; height: 50px; background: ${PANEL}; display: flex; align-items: center;
  color: #b3b5b9; font: italic 500 22px ${UI}; padding: 0 19px 2px 17px; letter-spacing: -.400px;
  span { flex: 1; margin-left: 28px; }
`;
const StatusBar = styled.div`
  flex: none; height: 48px; border-top: 2px solid ${EDGE}; border-bottom: 2px solid ${EDGE}; border-left: 2px solid ${EDGE}; display: flex; background: #3a4351;
`;
const LayoutTab = styled.div<{ $w: number; $on?: boolean }>`
  width: ${p => p.$w}px; display: flex; align-items: center; justify-content: center; border-right: 2px solid ${EDGE};
  background: ${p => (p.$on ? "#4c586c" : "transparent")}; color: ${p => (p.$on ? "#fff" : "#a3a7ae")};
  font: ${p => (p.$on ? 600 : 500)} 22px ${UI}; letter-spacing: -.100px; padding-bottom: 1px;
`;
const Coords = styled.div`
  margin-left: auto; width: 341px; border-left: 2px solid ${EDGE}; display: flex; align-items: center; color: #b5b7bb; padding: 0 0 1px 23px;
  font: 500 22px ${UI}; white-space: pre;
`;
const Toggles = styled.div`display: flex; gap: 4px; padding-top: 2px;`;
const Toggle = styled.div<{ $on?: boolean }>`
  width: 40px; height: 40px; background: ${p => (p.$on ? "#6488bb" : "transparent")};
`;
const ScalePick = styled.div`
  width: 153px; display: flex; align-items: center; color: #c3c5c9; font: 500 21px ${UI}; letter-spacing: -.500px; padding-bottom: 1px;
  svg:nth-child(2) { margin: 0 18px 0 auto; }
  svg:nth-child(3) { margin-right: 14px; }
`;
const ScaleText = styled.span`display: flex; align-items: center; gap: 8px;`;

const Panel = styled.aside`background: ${PANEL}; display: flex; flex-direction: column; min-height: 0;`;
const PanelTabs = styled.div`height: 46px; flex: none; display: grid; grid-template-columns: 103px 105px 105px 109px 50px;`;
const PanelTab = styled.div<{ $kind: "on" | "off" | "fold" }>`
  display: flex; align-items: center; justify-content: center; padding-left: 2px;
  ${p => p.$kind === "off" && `background: #30333e; border-left: 2px solid ${EDGE};`}
  ${p => p.$kind === "fold" && `border-left: 2px solid ${EDGE};`}
  ${p => p.$kind !== "on" && `border-bottom: 2px solid ${EDGE};`}
`;
const LayersBox = styled.section`height: 300px; flex: none; border-bottom: 2px solid ${EDGE}; padding: 0 16px 0 21px;`;
const PanelHead = styled.h2`
  margin: 0; height: 34px; display: flex; align-items: center; font: 500 22.500px ${UI}; color: #f0f1f3; justify-content: space-between; padding-right: 5px;
`;
const LayerTools = styled.div`display: flex; gap: 16.200px; margin: 31px 0 0 7px; svg { overflow: visible; }`;
const Combo = styled.div<{ $h: number; $pl?: number; $dim?: boolean }>`
  height: ${p => p.$h}px; border-radius: 5px; display: flex; align-items: center; padding: 0 10px 1px ${p => p.$pl ?? 13}px;
  background: ${p => (p.$dim ? "#444c5e" : "#505a6f")}; border: 2px solid ${p => (p.$dim ? "#3f4858" : "#2d3a3d")};
  color: ${p => (p.$dim ? "#80868f" : "#fff")}; font: 500 21.700px ${UI}; white-space: pre;
  > svg:last-child { margin-left: auto; }
`;
const LayerCombo = styled(Combo)`margin: 23px 0 0 0; width: 436px; gap: 17px;`;
const StateCombo = styled(Combo)`margin: 7px 0 0 2px; width: 432px;`;
const ShowList = styled.div`display: flex; align-items: center; gap: 26px; margin: 12px 0 0 12px; height: 30px; color: #cfd1d4; font: 500 21.900px ${UI};`;
const PropHead = styled.div`display: flex; align-items: flex-start; padding: 0 15px 0 21px; height: 51px; flex: none;`;
const PropTitle = styled.h2`margin: 1px 0 0; width: 219px; font: 500 22.500px/34px ${UI}; color: #f0f1f3; letter-spacing: .200px;`;
const Segmented = styled.div`
  display: flex; border: 2px solid ${EDGE}; border-top: 0; height: 27px; font: 500 18px/25px ${UI}; width: 121px; text-align: center;
  span { flex: 1; color: #80858f; background: #434b5a; }
  span + span { color: #fff; background: ${ACTIVE}; border-left: 2px solid ${EDGE}; }
`;
const HeadIcon = styled.span<{ $ml: number }>`margin-left: ${p => p.$ml}px;`;
const SpaceCombo = styled(Combo)`margin: 0 0 0 23px; width: 427px; flex: none;`;
const PropRows = styled.div`display: flex; flex-direction: column; gap: 8px; margin: 14px 0 0 0;`;
const PropRow = styled.div<{ $hover?: boolean }>`
  height: 38px; display: grid; grid-template-columns: 133px 226px; column-gap: 20px; padding-left: 67px; align-items: stretch; position: relative;
  ${p => p.$hover && `&::before { content: ""; position: absolute; left: 20px; right: 20px; top: -4px; bottom: -4px; border: 2px solid #484e58; }`}
`;
const PropLabel = styled.span`
  display: block; text-align: right; white-space: nowrap; color: #cfd1d4; font: 500 21.200px/36px ${UI}; position: relative;
`;
const PropValue = styled.div`display: flex; gap: 4px; min-width: 0; position: relative; > div { flex: 1; }`;
const TransField = styled.div`
  flex: none !important; width: 136px; margin: 2px 3px 2px 6px; background: #505a6f; border: 2px solid #2d3a3d; color: #fff; font: 500 21.500px/32px ${UI};
  display: flex; justify-content: flex-end; padding-right: 5px;
  background-image: linear-gradient(#5f8fe0, #5f8fe0), linear-gradient(#5f8fe0, #5f8fe0); background-size: 2px 5px; background-repeat: no-repeat; background-position: 0 1px, 0 25px;
  i { width: 1px; height: 11px; background: #8b93a3; margin: 16px 52px 0 0; }
`;
const IconButton = styled.div`flex: none !important; width: 40px; height: 36px; border: 2px solid #2d3a3d; border-radius: 4px; svg { margin: -2px 0 0 1px; }`;

const DockShelf = styled.footer`
  margin: 12px auto 0 67px; width: 2746px; height: 102px; border-radius: 30px; display: flex; padding-left: 3px; border: 2px solid rgba(185,195,230,.600);
  background: linear-gradient(90deg, #6678a5 0, #6580b2 250px, #6d7fb4 700px, #797ab0 1400px, #8478ae 2000px, #9a78ac 2400px, #a6769f 2740px);
`;
const DockItem = styled.div<{ $run?: boolean }>`
  width: 83.150px; height: 98px; display: flex; flex-direction: column; align-items: center; padding-top: 14px;
  svg { overflow: visible; filter: drop-shadow(0 2px 2px rgba(0,0,0,.25)); }
  ${p => p.$run && `&::after { content: ""; width: 8px; height: 8px; border-radius: 50%; background: #14124a; margin-top: 10px; }`}
`;
const DockSep = styled.div`width: 39px; display: flex; justify-content: center; &::after { content: ""; width: 2px; height: 74px; margin-top: 12px; background: #5a5388; }`;

/* ---------- pieces ---------- */
const Gear = ({ s = 19, c = "#f4f5f7", hole = PALETTE, r = 2.4 }: any) => (
  <svg width={s} height={s} viewBox="-10 -10 20 20">
    {[0, 45, 90, 135].map(a => <rect key={a} x={-2.300} y={-9.500} width={4.600} height={19} fill={c} transform={`rotate(${a})`} />)}
    <circle r={6.600} fill={c} /><circle r={r} fill={hole} />
  </svg>
);
const Tri = ({ w = 12, h = 7, c = "#dcdee2" }: any) => <svg width={w} height={h} viewBox="0 0 12 7" preserveAspectRatio="none"><path d="M0 0H12L6 7Z" fill={c} /></svg>;

type Spec = { n: string; big?: boolean; col?: number; row?: number; arrow?: boolean };
const Tool = ({ s }: { s: Spec }) => (
  <ToolCell $big={s.big} $col={s.col} $row={s.row} $arrow={s.arrow}>
    <svg width={s.big ? 64 : 32} height={s.big ? 64 : 32} viewBox={s.big ? "0 0 64 64" : "0 0 32 32"}>{tools[s.n]}</svg>
  </ToolCell>
);
const big = (n: string, col: number, arrow = false): Spec => ({ n, big: true, col, arrow });
const sm = (n: string, col?: number, row?: number, arrow = false): Spec => ({ n, col, row, arrow });
const sections: { title: string; main: Spec[]; sub?: Spec[] }[] = [
  { title: "Draw", main: [big("line", 1), big("polyline", 3), big("circle", 5, true), big("rect", 7, true)],
    sub: ["arc", "spline", "xline", "ray", "ellipse", "cloud", "point", "helix"].map((n, i) => sm(n, i + 1, 1, i < 7)) },
  { title: "Hatch", main: [big("hatch", 1), big("hatchEdit", 3, true), big("gradient", 5), sm("boundary", 7, 1), sm("wipeout", 8, 1), sm("region", 7, 2)] },
  { title: "Block", main: [big("createBlock", 1), big("insertBlock", 3), big("editBlock", 5), big("editAttr", 7, true)],
    sub: ["tag", "blockList", "blockSave", "blockAdd", "tagSync", "tagArea", "blockSwap"].map((n, i) => sm(n, i + 1, 1)) },
  { title: "Modify", main: [big("move", 1), sm("copy", 3, 1), sm("rotate", 4, 1), sm("mirror", 3, 2), sm("pick", 4, 2), big("trim", 5, true), sm("fillet", 7, 1, true), sm("array", 8, 1, true), sm("offset", 7, 2), sm("box", 8, 2)],
    sub: ["stretch", "explode", "scale", "breakAt", "join", "layerUp", "blockConv", "purge"].map((n, i) => sm(n, i + 1, 1, i === 3)) },
  { title: "Text", main: [big("textA", 1), big("textBrush", 3), sm("textLine", 5, 1), sm("spell", 6, 1), sm("textStyle", 7, 1), sm("pdfText", 8, 1), sm("textNote", 5, 2), sm("find", 6, 2), sm("textSync", 7, 2), sm("pdfTool", 8, 2)] },
  { title: "Dimension", main: [big("dimAuto", 1), big("dimBrush", 3), sm("dimLinear", 5, 1, true), sm("dimCircle", 6, 1, true), sm("dimOrd", 7, 1), sm("dimRuler", 8, 1), sm("dimCont", 5, 2, true), sm("tolerance", 6, 2), sm("dimCheck", 7, 2), sm("dimSpace", 8, 2, true)] },
  { title: "Leader", main: [big("leader", 1), big("leaderBrush", 3), sm("leaderAdd", 5, 1), sm("leaderAlign", 6, 1), sm("leaderBolt", 7, 1), sm("leaderDel", 5, 2), sm("leaderCollect", 6, 2)] },
  { title: "Table", main: [big("table", 1), big("dataLink", 3), sm("textStyle", 5, 1), sm("linkSync", 6, 1), sm("linkDown", 5, 2)] },
  { title: "Parametric", main: [big("perp", 1), sm("autoCon", 3, 1), sm("conBulb", 4, 1), sm("conHalf", 3, 2), sm("conCyan", 4, 2), big("dimLock", 5), sm("dimConv", 7, 1), sm("dimBulb", 8, 1), sm("dimHalf", 7, 2), sm("dimCyan", 8, 2)] },
];

const toolbarGroups = [
  ["new", "open", "save", "saveAs"], ["undo", "redo"], ["print", "printTo", "pageSetup", "pageEdit"],
  ["importDoc", "exportDoc", "attach", "webSave", "compare"], ["zoomWin", "pan", "orbit"],
  ["calc", "quick", "cloudAdd", "match", "purge"], ["recover", "inspect"],
];

const menus: [string, number, number?][] = [
  ["File", 83], ["Edit", 88], ["View", 99], ["Insert", 110], ["Format", 127], ["Tools", 106], ["Draw", 103],
  ["Dimension", 167], ["Modify", 126], ["Window", 137], ["Help", 80],
];

const AppleShape = ({ c = "#f6f6fa" }: { c?: string }) => (
  <path fill={c} d="M18.700 16.800c0-3.300 2.700-4.900 2.800-5-1.500-2.200-3.900-2.500-4.700-2.600-2-.200-3.900 1.200-4.900 1.200s-2.600-1.200-4.300-1.100C5.400 9.300 3.400 10.600 2.200 12.500-.100 16.500 1.600 22.500 3.900 25.700c1.100 1.600 2.400 3.300 4.200 3.300 1.700-.100 2.300-1.100 4.300-1.100s2.600 1.100 4.300 1c1.800 0 2.900-1.600 4-3.200 1.300-1.800 1.800-3.600 1.800-3.700-.100 0-3.800-1.400-3.800-5.200zM15.500 7.200c.900-1.100 1.500-2.600 1.300-4.200-1.300.100-2.900.900-3.800 2-.800.900-1.600 2.500-1.400 4 1.500.100 3-.700 3.900-1.800z" />
);

/* ---------- CAD drawing ---------- */
const Arrow = ({ x, y, dir }: { x: number; y: number; dir: "u" | "d" | "l" | "r" }) => {
  const d = { u: `l-3 15h6z`, d: `l-3 -13h6z`, l: `l14 -3v6z`, r: `l-15 -3v6z` }[dir];
  return <path d={`M${x} ${y}${d}`} fill="#fff" />;
};
const Lab = ({ x, y, w, s = 27, children, r }: any) => (
  <text x={x} y={y} fontSize={s} fill="#fff" fontFamily={ARIAL} textLength={w} lengthAdjust="spacingAndGlyphs" transform={r ? `rotate(-90 ${x} ${y})` : undefined}>{children}</text>
);
const Serif = ({ x1, x2, y, s = 29.5, children }: any) => (
  <text x={x1} y={y} fontSize={s} fill="#fff" fontFamily={TIMES} textLength={x2 - x1} lengthAdjust="spacing">{children}</text>
);
const Drawing = () => {
  const grid: React.ReactNode[] = [];
  for (let k = -14; k < 118; k++) {
    const x = Math.round(596.2 + k * 15.826) + 0.5;
    if (x > 370) grid.push(<path key={`v${k}`} d={`M${x} 214V1628`} stroke={k % 5 === 0 ? "#2f3645" : "#252c36"} />);
  }
  for (let k = -30; k < 60; k++) {
    const y = Math.round(686 + k * 15.85) + 0.5;
    if (y > 214 && y < 1628) grid.push(<path key={`h${k}`} d={`M370 ${y}H2406`} stroke={k % 5 === 0 ? "#2f3645" : "#252c36"} />);
  }
  const nodes: [number, number, number][] = [
    [719, 150, 33], [517, 306, 32], [816, 366, 28], [646, 492, 27], [78, 228, 33], [272, 228, 28], [78, 516, 33], [272, 516, 28],
    [69, 684, 25], [281, 690, 23], [549, 690, 14], [627, 690, 14], [756, 690, 14], [835, 690, 14], [69, 918, 25], [291, 918, 23],
    [646, 936, 13], [756, 918, 14], [830, 912, 14], [1241, 144, 13], [1420, 150, 14], [1139, 306, 9], [1328, 312, 9], [1287, 360, 14],
    [1471, 384, 9], [1176, 534, 14], [1273, 540, 9], [1374, 516, 14], [1231, 630, 14], [1467, 666, 13], [1420, 750, 14], [1176, 756, 14],
    [1144, 876, 14], [1365, 906, 14],
  ];
  return (
    <svg width={2036} height={1414} viewBox="370 214 2036 1414">
      <g strokeWidth={1}>{grid}</g>
      <path d="M370 1556.500H2406" stroke="#5b2228" strokeWidth={1} />
      {/* view label */}
      <g fill="#9b9c9b" fontFamily={UI} fontWeight={500}>
        <path d="M398 240.500H410M404 234V247" stroke="#9b9c9b" strokeWidth={1.600} />
        <path d="M435.500 224V251M508 224V251" stroke="#8d8e8e" strokeWidth={2} />
        <text x={448} y={247} fontSize={22.500} textLength={43}>Top</text>
        <text x={520} y={247} fontSize={22.500} textLength={155}>2D Wireframe</text>
      </g>
      {/* problem statements */}
      <Serif x1={861} x2={894} y={483}>Q1</Serif>
      <Serif x1={552} x2={1203} y={515}>DRAW THE PROJECTIONS OF A CYLINDER, BASE</Serif>
      <Serif x1={584} x2={1170} y={547}>200 MM DIAMETER AND AXIS 300MM LONG,</Serif>
      <Serif x1={650} x2={1106} y={579}>RESTING ON IT'S BASE ON THE HP</Serif>
      <Serif x1={1694} x2={1730} y={415}>Q2</Serif>
      <Serif x1={1497} x2={1929} y={447}>A SQUARE PRISM HAVING BASE</Serif>
      <Serif x1={1676} x2={1748} y={479}>EDGE</Serif>
      <Serif x1={1465} x2={1958} y={511}>OF 40MMAND AXIS 50MM LONG HAS</Serif>
      <Serif x1={1471} x2={1954} y={543}>IT'S BASE INCLINED AT 60 DEGREES</Serif>
      <Serif x1={1465} x2={1961} y={575}>TO THE HP AND RESTING ON ONE OF</Serif>
      <Serif x1={1471} x2={1954} y={607}>IT'S BASE EDGES, THE EDGE WHICH</Serif>
      <Serif x1={1465} x2={1958} y={641}>IS IN HP IS INCLINED AT 30 DEGREES</Serif>
      <Serif x1={1639} x2={1785} y={673}>TO THE VP.</Serif>
      <Serif x1={1546} x2={1878} y={705}>DRAW IT'S PROJECTIONS</Serif>
      {/* title blocks */}
      <g fill="none" stroke="#e9eaec" strokeWidth={1.400}>
        <rect x={542.500} y={1186.500} width={652} height={222} />
        <rect x={1424.500} y={1188.500} width={652} height={222} />
      </g>
      <Serif x1={623} x2={1122} y={1247} s={42}>PARTH JOHRI 2K20/B17/33</Serif>
      <Serif x1={792} x2={936} y={1313} s={42}>SOLIDS</Serif>
      <Serif x1={785} x2={943} y={1377} s={42}>SHEET 6</Serif>
      <Serif x1={1495} x2={1996} y={1257} s={42}>PARTH JOHRI 2K20/B17/33</Serif>
      <Serif x1={1676} x2={1820} y={1319} s={42}>SOLIDS</Serif>
      <Serif x1={1664} x2={1823} y={1383} s={42}>SHEET 6</Serif>
      {/* cylinder */}
      <g fill="none" stroke="#eef0f2" strokeWidth={1.300}>
        <path d="M846 742.500H1010.500M846 912.500H1010.500M896.500 742V1133M1010.500 742V1133M848.500 742V912M896 1132.500H1010" />
        <path d="M952.500 706V1115M896 1042.500H1010" strokeDasharray="6 2" />
        <path d="M558 916.500L1168.500 920.500M1192 920.500H2202" />
        <circle cx={953} cy={1042.500} r={57} />
      </g>
      <Arrow x={848.5} y={742} dir="u" /><Arrow x={848.5} y={912} dir="d" /><Arrow x={896} y={1132.5} dir="l" /><Arrow x={1010.5} y={1132.5} dir="r" />
      <Lab x={894} y={736} w={20}>a'</Lab><Lab x={927} y={740} w={19}>b'</Lab><Lab x={956} y={740} w={18}>d'</Lab><Lab x={1007} y={734} w={17}>c'</Lab>
      <Lab x={872} y={914} w={16}>1'</Lab><Lab x={934} y={914} w={18}>2'</Lab><Lab x={961} y={914} w={18}>4'</Lab><Lab x={1007} y={910} w={19}>3'</Lab>
      <Lab x={966} y={984} w={39}>d,4</Lab><Lab x={856} y={1054} w={36}>a,1</Lab><Lab x={1021} y={1054} w={38}>c,3</Lab><Lab x={949} y={1088} w={38}>b,2</Lab>
      <Lab x={923} y={1130} w={57} s={18.500}>357,26</Lab><Lab x={845} y={857} w={54} s={18.500} r>535,88</Lab>
      {/* prism */}
      <g transform="translate(1380 740) scale(.4337 .3333)" fill="none" stroke="#eef0f2">
        {[
          "M93 84V980M282 84V980M51 229H299M56 229V541M93 691H952M93 943H962M93 973H282",
          "M550 331V975M647 541V700M647 950V981M757 169V987M854 385V987M757 169H1422M550 331H1320M854 385H1468",
          "M1154 331V880M1199 541V768M1255 169V645M1301 385V541M1320 331V1003M1366 541V895M1422 169V768M1468 385V661",
          "M757 169L550 325L647 541L854 385ZM1255 169L1301 385M1154 331L1199 541M1422 169L1468 385M1320 331L1366 541",
          "M1301 541L1468 661L1320 1003L1154 880ZM1255 645L1422 768",
        ].map(d => <path key={d} d={d} vectorEffect="non-scaling-stroke" strokeWidth={1.300} />)}
        {["M190 543V998M647 700V950", "M1255 169L1154 331M1422 169L1320 331M1301 390L1199 541M1468 390L1366 541", "M897 543L1366 895M1199 768L1366 895"].map(d => (
          <path key={d} d={d} vectorEffect="non-scaling-stroke" strokeWidth={1.500} strokeDasharray="7 2" />
        ))}
        {nodes.map(([x, y, w]) => <rect key={`${x}-${y}`} x={x} y={y} width={w} height={24} fill="#fff" stroke="none" />)}
      </g>
      <Arrow x={1404.5} y={816} dir="u" /><Arrow x={1404.5} y={920} dir="d" /><Arrow x={1420.500} y={1064.500} dir="l" /><Arrow x={1502} y={1064.500} dir="r" />
      <Lab x={1400} y={897} w={54} s={18.500} r>325,08</Lab><Lab x={1434} y={1064} w={54} s={18.500}>260,07</Lab>
      <Lab x={1620} y={1051} w={4} s={7}>1</Lab><Lab x={1946} y={1082} w={4} s={7}>1</Lab>
      {/* compass */}
      <circle cx={2243} cy={376.700} r={107} fill="none" stroke="rgba(130,130,134,.420)" strokeWidth={31} />
      <rect x={2191.500} y={325} width={104} height={104} fill="#aeb0b3" stroke="#8e9094" strokeWidth={1} />
      <rect x={2211} y={345} width={64} height={64} fill="#a1a5ab" />
      <text x={2243} y={388} fontSize={30} fontWeight={700} fill="#54575c" textAnchor="middle" textLength={44} lengthAdjust="spacingAndGlyphs" fontFamily={ARIAL}>TOP</text>
      <g fontFamily={ARIAL} fontWeight={700} fontSize={46} fill="#b0b1b3" textAnchor="middle" stroke="#4a4c50" strokeWidth={2} paintOrder="stroke">
        <text x={2243} y={282} textLength={32} lengthAdjust="spacingAndGlyphs">N</text><text x={2243} y={507}>S</text><text x={2356} y={394}>E</text><text x={2130} y={393}>W</text>
      </g>
      <rect x={2193} y={555} width={100} height={24} rx={8} fill="#6e757b" />
      <text x={2201} y={575} fontSize={21} fill="#20262d" fontFamily={UI} fontWeight={500} textLength={48} lengthAdjust="spacingAndGlyphs">WCS</text>
      <path d="M2266 563H2283L2274.500 573Z" fill="#8b959b" stroke="#20262d" strokeWidth={1.500} />
      {/* UCS icon */}
      <g fill="none" stroke="#c8cacd" strokeWidth={1.400}>
        <path d="M404.500 1491V1581M413 1589.500H501" /><rect x={397} y={1581.500} width={16} height={16} />
        <path d="M404.500 1581V1589.500H413" />
        <path d="M408 1457L420 1468L432 1457M420 1468V1479M513 1563L537 1587M537 1563L513 1587" />
      </g>
      {/* cross hair */}
      <g fill="none" stroke="#e6e7e9" strokeWidth={1.300}>
        <path d="M1910 1542.500H1976M1988 1542.500H2055M1982.500 1470V1536M1982.500 1548V1614" /><rect x={1976.500} y={1536.500} width={12} height={12} />
      </g>
    </svg>
  );
};

/* ---------- status toggles ---------- */
const ST = "#e3e4e6";
const toggles: [boolean, React.ReactNode][] = [
  [true, <><P d="M5 12H35M5 20H35M5 28H35" c={W} /><P d="M12 5V35M20 5V35M28 5V35" c={W} /></>],
  [false, <g>{[8, 18, 28].map(y => [8, 18, 28].map(x => <R key={`${x}${y}`} x={x} y={y} w={4} c={ST} />))}</g>],
  [false, <P d="M7 5V35H36M7 25H17V35" c={ST} />],
  [false, <><P d="M33 22A13 13 0 1 1 26 9" c={ST} /><P d="M16 21H37M16 21L34 6" c={ST} /></>],
  [true, <><P d="M11 8V22M4 15H18" c={W} /><rect x={17} y={24} width={19} height={8} fill={W} /><P d="M20 26V30" c="#6488bb" w={1.5} /></>],
  [false, <><P d="M4 9H38" c={ST} w={2} /><R x={4} y={7} w={16} h={4} c={ST} /><R x={4} y={16} w={18} h={5} c={ST} /><P d="M22 17H38" c={ST} /><R x={4} y={25} w={18} h={8} c={ST} /><P d="M22 26H38" c={ST} /></>],
  [true, <><rect x={7} y={7} width={27} height={26} fill="none" stroke={W} strokeWidth={2} />{[0, 1, 2, 3, 4, 5].map(r => [0, 1, 2].map(q => <R key={`${r}${q}`} x={9 + q * 8 + (r % 2) * 4} y={9 + r * 3.800} w={4} h={3.800} c={W} />))}</>],
  [true, <><P d="M14 5H7V33H14M22 5H29V12" c={W} w={2.600} /><rect x={13} y={9} width={8} height={8} fill="none" stroke={W} strokeWidth={2} /><C x={17} y={24} r={4} s={W} /><F d="M24 15L36 29L30 29.500L33 36L30 37L27 31L24 33Z" c={W} /></>],
  [true, <P d="M36 31H6L28 8" c={W} w={2.400} />],
  [true, <><rect x={5} y={5} width={8} height={8} fill="none" stroke={W} strokeWidth={2} /><P d="M17 9H35V34H9V17" c={W} w={2.400} /></>],
  [true, <><F d="M18 4Q21 12 21 20L32 34Q24 32 18 27Q12 32 4 35L15 20Q15 12 18 4Z" c={W} /><C x={30} y={12} r={6.5} c={W} /></>],
  [false, <><F d="M17 4Q20 12 20 20L31 34Q23 32 17 27Q11 32 3 35L14 20Q14 12 17 4Z" c={ST} /><Bolt t="translate(21 5) scale(.900)" /></>],
  [false, <F d="M20 4Q23 12 23 20L34 34Q26 32 20 27Q14 32 6 35L17 20Q17 12 20 4Z" c={ST} />],
];

/* ---------- properties ---------- */
type Row = { l: string; v: string; kind?: string };
const rows: Row[] = [
  { l: "Color", v: "255,255,255", kind: "color" }, { l: "Layer", v: "0" }, { l: "Linetype", v: "DASH...", kind: "line" },
  { l: "Linetype sc...", v: "1", kind: "field" }, { l: "Lineweight", v: "ByLayer" }, { l: "Transparency", v: "0", kind: "trans" },
  { l: "Text style", v: "Standard", kind: "hover" }, { l: "Dimension s...", v: "ISO-25" }, { l: "Multileader...", v: "Standard" },
  { l: "Table style", v: "Standard" }, { l: "Annotation s...", v: "1:1" }, { l: "Text height", v: "60.8404", kind: "height" },
  { l: "Plot style", v: "ByColor" }, { l: "Plot style ta...", v: "None" }, { l: "Plot style at...", v: "Model", kind: "dim" },
  { l: "Plot table ty...", v: "Not available", kind: "dim" },
];
const StackIcon = () => (
  <svg width={26} height={24} viewBox="0 0 26 24"><F d="M8 2H25L17 10H0Z" c={LB} /><P d="M1 14H17L24 7M1 19H17L24 12" c={G} w={2.400} /></svg>
);
const Value = ({ r }: { r: Row }) => {
  if (r.kind === "field") return <Combo $h={38} $pl={7}>{r.v}</Combo>;
  if (r.kind === "dim") return <Combo $h={38} $pl={7} $dim>{r.v}</Combo>;
  if (r.kind === "height") return (
    <><Combo $h={38} $pl={7}>{r.v}</Combo>
      <IconButton><svg width={34} height={34}><P d="M2 0V29M30 0V13" c={G} /><DimH x1={5} x2={28} y={6} c={BL} h={4} /><P d="M14 24H34M24 15V34" /><rect x={20} y={20} width={8} height={8} fill="none" stroke={G} strokeWidth={1.500} /></svg></IconButton></>
  );
  if (r.kind === "trans") return <><TransField><i />{r.v}</TransField><Combo $h={38} $pl={15}><StackIcon /><Tri /></Combo></>;
  return (
    <Combo $h={38}>
      {r.kind === "color" && <svg width={44} height={18} viewBox="0 0 44 18"><rect x={4} y={1} width={16} height={16} fill="#fff" stroke="#000" strokeWidth={2} /></svg>}
      {r.kind === "line" && <svg width={93} height={4}><P d="M0 2H44M64 2H66" c={W} /></svg>}
      {r.v}<Tri />
    </Combo>
  );
};

/* ---------- dock icons ---------- */
const Tile = ({ c, children }: any) => <><rect width={64} height={64} rx={15} fill={c} />{children}</>;
const RedDot = ({ x, y, t }: any) => <><circle cx={x} cy={y} r={15} fill="#e4503f" /><text x={x} y={y + 6.500} fontSize={19} textAnchor="middle" fill="#fff" fontFamily={UI}>{t}</text></>;
const WordIcon = () => (
  <>
    <rect x={14} y={2} width={48} height={60} rx={4} fill="#2d5cbf" /><path d="M14 17V6Q14 2 18 2H58Q62 2 62 6V17Z" fill="#4fa0ea" /><rect x={14} y={17} width={48} height={15} fill="#3a7ad8" /><path d="M14 47H62V58Q62 62 58 62H18Q14 62 14 58Z" fill="#1f3f94" />
    <rect x={-2} y={14} width={35} height={35} rx={4} fill="#1f4eab" /><text x={15.500} y={41} fontSize={27} fontWeight={700} fill="#fff" textAnchor="middle" fontFamily={ARIAL} textLength={26} lengthAdjust="spacingAndGlyphs">W</text>
  </>
);
const PptIcon = () => (
  <>
    <circle cx={36} cy={32} r={31} fill="#d2603a" /><path d="M36 1A31 31 0 0 1 67 32H36Z" fill="#f19575" /><path d="M36 1A31 31 0 0 0 5 32H36Z" fill="#e4714b" />
    <rect x={-2} y={14} width={35} height={35} rx={4} fill="#b83f20" /><text x={15.500} y={41} fontSize={27} fontWeight={700} fill="#fff" textAnchor="middle" fontFamily={ARIAL}>P</text>
  </>
);
const ChromeIcon = () => (
  <>
    <rect width={64} height={64} rx={15} fill="#fbfbfb" />
    <circle cx={32} cy={32} r={26} fill="#f7cf52" />
    <path d="M32 32L9.500 19A26 26 0 0 1 54.500 19H32Z" fill="#cf4b3c" /><path d="M32 32L43.500 38.500L32 58A26 26 0 0 1 9.500 19L21 38.500Z" fill="#4d9e58" />
    <circle cx={32} cy={32} r={12} fill="#fff" /><circle cx={32} cy={32} r={9.500} fill="#5187ec" />
  </>
);
const GearIcon = () => (
  <>
    <defs><linearGradient id="sp" x1="0" y1="0" x2="0" y2="1"><stop offset="0" stopColor="#d4e0e6" /><stop offset="1" stopColor="#8c8c88" /></linearGradient></defs>
    <rect width={64} height={64} rx={15} fill="url(#sp)" />
    <circle cx={32} cy={32} r={27} fill="#2a2c2e" /><circle cx={32} cy={32} r={23} fill="none" stroke="#85898c" strokeWidth={2} strokeDasharray="2 1.500" />
    <circle cx={32} cy={32} r={18} fill="#55585b" stroke="#9a9da0" strokeWidth={3} /><circle cx={32} cy={32} r={7} fill="#2c2e30" stroke="#aaa" strokeWidth={2} />
    <path d="M39 32H50M28.500 38L23 47M28.500 26L23 17" stroke="#a4a7aa" strokeWidth={4} />
  </>
);
const Thumb = ({ x, y, w, h, children, top = "#e9e9ec" }: any) => (
  <>
    <rect x={x} y={y} width={w} height={h} fill="#f7f6f6" /><rect x={x} y={y} width={w} height={5} fill={top} />{children}
  </>
);
const tileRows = ["#67d94c", "#f3c13e", "#f0923a", "#c93a2c", "#a9a9ae", "#e5485f", "#a04bd8", "#3aa3f0", "#55c6a4"];
const petals = ["#f29b38", "#e8d63c", "#a9cf4c", "#5fb985", "#5b9fd8", "#8a7ac8", "#c66aa8", "#e0604e"];
const dock: ("|" | { k: string; run?: boolean; g: React.ReactNode })[] = [
  { k: "finder", run: true, g: <><defs><linearGradient id="fi" x1="0" y1="0" x2="0" y2="1"><stop offset="0" stopColor="#5cc6f7" /><stop offset="1" stopColor="#3e74ee" /></linearGradient></defs><Tile c="#e8eaf2" /><path d="M35 0H15Q0 0 0 15V49Q0 64 15 64H39Q36 55 36 38H27Q28 15 35 0Z" fill="url(#fi)" /><path d="M17 18V25M46 18V25M12 42Q32 60 52 42" stroke="#14233f" strokeWidth={2.600} fill="none" strokeLinecap="round" /><path d="M35 0Q28 15 27 38H36Q36 55 39 64" stroke="#1f4474" strokeWidth={1} fill="none" /></> },
  { k: "launchpad", g: <><Tile c="#c9cfdf" />{tileRows.map((c, i) => <rect key={c} x={10 + (i % 3) * 16} y={10 + Math.floor(i / 3) * 16} width={12} height={12} rx={3} fill={c} />)}</> },
  { k: "safari", run: true, g: <><defs><linearGradient id="sf" x1="0" y1="0" x2="0" y2="1"><stop offset="0" stopColor="#53b9f5" /><stop offset="1" stopColor="#2a64d8" /></linearGradient></defs><Tile c="#f4f4f4" /><circle cx={32} cy={32} r={27} fill="url(#sf)" /><circle cx={32} cy={32} r={24} fill="none" stroke="#fff" strokeOpacity={0.600} strokeWidth={3} strokeDasharray="1 2.500" /><path d="M52 13L36 36L28 28Z" fill="#ef4b3c" /><path d="M12 51L28 28L36 36Z" fill="#f5f5f5" /></> },
  { k: "messages", g: <><defs><linearGradient id="ms" x1="0" y1="0" x2="0" y2="1"><stop offset="0" stopColor="#88f27c" /><stop offset="1" stopColor="#52c144" /></linearGradient></defs><Tile c="url(#ms)" /><path d="M32 11C46 11 56 20 56 31S46 51 32 51Q28 51 25 50Q22 54 17 54Q20 51 19 47Q9 41 9 31C9 20 18 11 32 11Z" fill="#f0faf0" /></> },
  { k: "mail", g: <><defs><linearGradient id="ml" x1="0" y1="0" x2="0" y2="1"><stop offset="0" stopColor="#3a73ee" /><stop offset="1" stopColor="#4fb5fa" /></linearGradient></defs><Tile c="url(#ml)" /><rect x={9} y={17} width={46} height={30} rx={3} fill="#f0f0f0" /><path d="M10 19L32 38L54 19M10 46L26 33M54 46L38 33" stroke="#9aa0a8" strokeWidth={1.500} fill="none" /></> },
  { k: "maps", g: <><clipPath id="mp"><rect width={64} height={64} rx={15} /></clipPath><g clipPath="url(#mp)"><rect width={64} height={64} fill="#ece9df" /><path d="M24 0H64V46Q34 36 24 0Z" fill="#83d95f" /><path d="M36 0Q38 24 64 32" stroke="#f5f5f5" strokeWidth={12} fill="none" /><path d="M0 20L64 58" stroke="#f6c646" strokeWidth={9} /><rect x={0} y={42} width={12} height={22} fill="#f3b5c6" /><rect x={9} y={0} width={13} height={64} fill="#fff" /><rect x={11} y={0} width={9} height={38} fill="#2f7bea" /></g><circle cx={16} cy={38} r={10} fill="#fff" /><circle cx={16} cy={38} r={7} fill="#2f7bea" /><path d="M36 42H62Q64 56 49 61Q34 56 36 42Z" fill="#3474c8" stroke="#fff" /><path d="M36 42H62V47H36Z" fill="#d8473c" /><text x={49} y={56} fontSize={9} fill="#fff" textAnchor="middle" fontWeight={700} fontFamily={ARIAL}>280</text></> },
  { k: "photos", g: <><Tile c="#fbfbfb" /><g opacity={0.900}>{petals.map((c, i) => <rect key={c} x={25} y={5} width={14} height={25} rx={7} fill={c} fillOpacity={0.850} transform={`rotate(${i * 45} 32 32)`} />)}</g></> },
  { k: "facetime", g: <><Tile c="url(#ms)" /><rect x={10} y={18} width={31} height={28} rx={7} fill="#f0f5f0" /><path d="M43 29L54 20Q55 20 55 22V42Q55 44 54 44L43 35Z" fill="#e6efe6" /></> },
  { k: "calendar", g: <><Tile c="#fafafa" /><path d="M0 20V15Q0 0 15 0H49Q64 0 64 15V20Z" fill="#e2564c" /><text x={31} y={15.500} fontSize={13} fill="#fff" textAnchor="middle" fontWeight={600} fontFamily={UI}>MAR</text><text x={32} y={54} fontSize={38} fill="#2a2a2a" textAnchor="middle" fontFamily={UI} fontWeight={300} textLength={45}>20</text><RedDot x={59} y={7} t="1" /></> },
  { k: "contacts", g: <><rect x={60} y={10} width={6} height={14} fill="#d9d9d4" /><rect x={60} y={24} width={6} height={10} rx={2} fill="#4fa8e0" /><rect x={60} y={34} width={6} height={10} rx={2} fill="#f0943c" /><rect x={60} y={44} width={6} height={12} rx={2} fill="#5cc65c" /><rect width={63} height={64} rx={14} fill="#a57d4b" /><circle cx={33} cy={32} r={20} fill="none" stroke="#7f5c33" strokeWidth={1.500} /><circle cx={33} cy={27} r={7} fill="#876238" /><path d="M20 46Q22 37 33 37T46 46Q40 52 33 52T20 46Z" fill="#876238" /></> },
  { k: "reminders", g: <><Tile c="#fbfbfa" />{[["#3478f0", 16], ["#e5493a", 32], ["#ea9c3a", 48]].map(([c, y]: any) => <g key={c}><circle cx={12} cy={y} r={5} fill="none" stroke={c} strokeWidth={1} /><circle cx={12} cy={y} r={3.200} fill={c} /><rect x={24} y={y - 1} width={34} height={1.600} fill="#c9c9cc" /></g>)}</> },
  { k: "notes", g: <><Tile c="#f4f4f0" /><path d="M0 16V15Q0 0 15 0H49Q64 0 64 15V16Z" fill="#f9cb43" /><path d="M0 18.500H64" stroke="#bcbcb4" strokeDasharray="1.500 1.500" strokeWidth={1.500} /><path d="M0 32.500H64M0 48.500H64" stroke="#d3d3ce" /></> },
  { k: "tv", g: <><Tile c="#17191a" /><g transform="translate(9 20) scale(.750)"><AppleShape c="#fff" /></g><text x={43} y={42} fontSize={25} fill="#fff" textAnchor="middle" fontWeight={500} fontFamily={UI} letterSpacing={-1}>tv</text><RedDot x={59} y={7} t="1" /></> },
  { k: "music", g: <><defs><linearGradient id="mu" x1="0" y1="0" x2="0" y2="1"><stop offset="0" stopColor="#f0606f" /><stop offset="1" stopColor="#e23a40" /></linearGradient></defs><Tile c="url(#mu)" /><path d="M22 17L46 11V42A6.500 5 0 1 1 43 37.500V21L25 25.500V47A6.500 5 0 1 1 22 42.500Z" fill="#fff" /></> },
  { k: "podcasts", run: true, g: <><defs><linearGradient id="pc" x1="0" y1="0" x2="0" y2="1"><stop offset="0" stopColor="#bd60ec" /><stop offset="1" stopColor="#7328b4" /></linearGradient></defs><Tile c="url(#pc)" /><circle cx={32} cy={29} r={6} fill="#fff" /><rect x={26.500} y={37} width={11} height={20} rx={5.500} fill="#fff" /><path d="M21 50A23 23 0 1 1 43 50M24 40A13.500 13.500 0 1 1 40 40" stroke="#fff" strokeWidth={2.800} fill="none" /></> },
  { k: "keynote", g: <><Tile c="#fafafa" /><path d="M2 16H62M2 32H62M2 48H62M16 0V64M48 0V64" stroke="#dde9f3" /><path d="M15 8H49L52 26H12Z" fill="#2f86e6" /><rect x={18} y={9} width={28} height={15} fill="#bfe0fa" /><circle cx={32} cy={17} r={6} fill="#f0a23c" /><path d="M32 17V11A6 6 0 0 0 28 21Z" fill="#6a9c3a" /><rect x={30.500} y={27} width={3} height={29} fill="#8a98a5" /><rect x={21} y={56} width={22} height={2.500} fill="#8a98a5" /></> },
  { k: "numbers", g: <><Tile c="#fafbf8" /><path d="M2 13H62M2 27H62M2 41H62M13 0V64M26 0V64M39 0V64M52 0V64" stroke="#d9eed2" /><rect x={12} y={34} width={9} height={22} fill="#e5394c" /><rect x={23} y={21} width={9} height={35} fill="#f29a35" /><rect x={34} y={9} width={9} height={47} fill="#63cf3e" /><rect x={45} y={15} width={9} height={41} fill="#35a3ee" /></> },
  { k: "pages", g: <><Tile c="#fbf9f6" /><path d="M4 12H60M4 22H60M4 32H60M4 42H60M4 52H60" stroke="#f0dcc8" /><text x={6} y={38} fontSize={42} fill="#f0973a" fontWeight={700} fontFamily={TIMES}>“</text><path d="M51 5L55 8L30 50L22 57L25 45Z" fill="#f0953a" /><path d="M30 38L33 42L26 52L22 57L24 47Z" fill="#333" /></> },
  { k: "appstore", g: <><defs><linearGradient id="as" x1="0" y1="0" x2="0" y2="1"><stop offset="0" stopColor="#45b8f6" /><stop offset="1" stopColor="#2661e6" /></linearGradient></defs><Tile c="url(#as)" /><path d="M29 13L46 49M35 13L22 38M17 47L19 43M11 39.500H36M42 39.500H53" stroke="#fff" strokeWidth={5} strokeLinecap="round" /></> },
  { k: "settings", run: true, g: <GearIcon /> },
  { k: "code", run: true, g: <><path d="M50 -2L66 6V58L50 66L4 22L-3 16L2 12Z" fill="#2f86d0" /><path d="M50 -2L2 45L-3 48L4 54L50 66L34 45V30L50 16Z" fill="#2a7cc8" /><path d="M50 -2L66 6V58L50 66Z" fill="#49a5ee" /><path d="M15 32L1 44L-4 43V22L1 20Z" fill="#8278ae" /><path d="M50 18V46L31 32Z" fill="#8278ae" /><path d="M4 52L12 48L40 66H18Z" fill="#8278ae" /><path d="M50 66L20 42L31 32L50 46Z" fill="#3a94de" /></> },
  { k: "acad", run: true, g: <><rect x={-8} y={-8} width={80} height={80} fill="#f6ebe6" /><path d="M-8 -8H20L-8 60Z" fill="#fdf8f5" /><path d="M6 60L27 2H38L59 60H46L41 45Q30 44 22 50L18 60ZM32 17L25 40Q31 37 38 38Z" fill="#bf2429" /><path d="M32 2H38L59 60H52Z" fill="#8c171c" /></> },
  "|",
  { k: "chrome", run: true, g: <ChromeIcon /> },
  { k: "ppt", run: true, g: <PptIcon /> },
  { k: "word", run: true, g: <WordIcon /> },
  { k: "msau", run: true, g: <><circle cx={32} cy={38} r={30} fill="#fbfbfb" /><rect x={17} y={24} width={14} height={14} fill="#e2633c" /><rect x={33} y={24} width={14} height={14} fill="#8cb83c" /><rect x={17} y={40} width={14} height={14} fill="#4fa3e3" /><rect x={33} y={40} width={14} height={14} fill="#efb442" /><path d="M26 -7H38V4H47L32 21L17 4H26Z" fill="#6fb356" /></> },
  "|",
  { k: "docx", g: <><rect x={3} y={18} width={60} height={20} fill="#3b3f4a" /><path d="M8 2H40L57 18V69H8Z" fill="#f2f2f4" /><path d="M40 2V18H57Z" fill="#cfcfd6" /><path d="M28 10H38M26 14H38M14 22H50M14 26H50M14 30H44" stroke="#a9a9ae" strokeDasharray="4 1.500" /><path d="M18 36H42M22 42H46M18 48H40" stroke="#d9b0ac" strokeWidth={2} strokeDasharray="4 2" /><text x={32} y={64} fontSize={11} fill="#555" textAnchor="middle" fontFamily={ARIAL}>DOCX</text></> },
  { k: "w1", g: <Thumb x={-5} y={2} w={75} h={60}><path d="M14 26H28V40H14Z" fill="#e3e3e6" /><circle cx={46} cy={34} r={7} fill="#ececec" stroke="#bbb" /><path d="M24 12H44M2 50H40" stroke="#c4c4c9" strokeWidth={2} /><g transform="translate(44 44) scale(.400)"><GearIcon /></g></Thumb> },
  { k: "w2", g: <Thumb x={-5} y={9} w={75} h={46} top="#2b579a"><rect x={-5} y={14} width={75} height={4} fill="#dfe4ee" /><rect x={-5} y={18} width={22} height={37} fill="#e7e9ee" /><rect x={48} y={18} width={22} height={37} fill="#e7e9ee" /><g transform="translate(43 46) scale(.400)"><WordIcon /></g></Thumb> },
  { k: "w3", g: <Thumb x={-5} y={12} w={75} h={41} top="#cf5a38"><rect x={-5} y={17} width={11} height={36} fill="#222" /><path d="M30 23H48" stroke="#555" strokeWidth={2} /><path d="M14 29H60M14 33H60M14 37H56M14 41H60M14 45H50" stroke="#9a9aa0" /><g transform="translate(43 44) scale(.400)"><PptIcon /></g></Thumb> },
  { k: "w4", g: <Thumb x={-5} y={12} w={75} h={41}><path d="M18 26H24M18 31H34M18 37H34" stroke="#b9b9c0" /><rect x={45} y={41} width={5} height={2.500} fill="#3a7ae0" /><g transform="translate(46 46) scale(.400)"><ChromeIcon /></g></Thumb> },
  { k: "trash", g: <><path d="M5 9H59L53 62Q50 68 32 68T11 62Z" fill="#dcdbe0" fillOpacity={0.900} /><path d="M20 14L23 62M32 14V64M44 14L41 62" stroke="#c4c2ca" strokeWidth={2} /><path d="M4 10Q6 -2 16 1Q22 -8 30 0Q38 -8 44 0Q58 -3 60 10Q40 16 4 10Z" fill="#ededf0" /><path d="M12 5L22 2L26 10ZM34 3L40 9L46 3ZM48 6L56 9L50 12Z" fill="#4f5f70" /><path d="M26 5L32 9L28 12Z" fill="#b06a48" /></> },
];

const DockOut = ({ flip }: { flip?: boolean }) => (
  <svg width={24} height={28} viewBox="0 0 24 28"><P d="M8 9V2H22V26H8V19" w={2.500} /><path d="M7 2H23" stroke={G} strokeWidth={flip ? 2 : 4} /><P d="M5 14H13" /><F d="M0 14L6 9.500V18.500Z" /></svg>
);

export default function App() {
  return (
    <>
      <GlobalStyle />
      <Desktop>
        <MenuBar>
          <MenuGroup>
            <StatusSlot $w={70}><svg width={27} height={34} viewBox="0 0 24 31"><AppleShape /></svg></StatusSlot>
            <MenuItem $w={230} $bold $ls={0.1}>AutoCAD 2021</MenuItem>
            {menus.map(([m, w]) => <MenuItem key={m} $w={w}>{m}</MenuItem>)}
          </MenuGroup>
          <MenuGroup>
            <StatusSlot $w={71}>
              <svg width={40} height={34}><g fill="#a9c3e0"><path d="M9 1L18 7L9 13L0 7ZM28 1L37 7L28 13L19 7ZM9 13L18 19L9 25L0 19ZM18 20L25 25L18 31L10 25Z" /></g><C x={29} y={24} r={9.5} c="#f6f6fa" /><P d="M25.500 20.500L32.500 27.500M32.500 20.500L25.500 27.500" c="#3a70ad" w={2.400} /></svg>
            </StatusSlot>
            <StatusSlot $w={87}>
              <svg width={52} height={24}><rect x={1} y={1} width={44} height={22} rx={6} fill="none" stroke="#a3c0df" strokeWidth={2} /><R x={4.500} y={4.500} w={4} h={15} c="#f6f6fa" /><F d="M47.500 8Q51 12 47.500 16Z" c="#a3c0df" /></svg>
            </StatusSlot>
            <StatusSlot $w={70}>
              <svg width={34} height={25} viewBox="0 0 34 25"><g fill="none" stroke="#f6f6fa" strokeWidth={4}><path d="M2 9Q17 -4 32 9" /><path d="M8 15.500Q17 8 26 15.500" /></g><F d="M12 19Q17 15 22 19L17 25Z" c="#f6f6fa" /></svg>
            </StatusSlot>
            <StatusSlot $w={63}>
              <svg width={27} height={27}><C x={11} y={11} r={9} s="#f6f6fa" w={2.800} /><P d="M17.500 17.500L25 25" c="#f6f6fa" w={3.200} /></svg>
            </StatusSlot>
            <StatusSlot $w={63}>
              <svg width={30} height={28}><rect x={1.500} y={1.500} width={26} height={10} rx={5} fill="none" stroke="#f6f6fa" strokeWidth={2.400} /><C x={7} y={6.500} r={3.500} c="#f6f6fa" /><rect y={15} width={29} height={13} rx={6.500} fill="#f6f6fa" /><C x={22} y={21.500} r={4} c="#3a70ad" /></svg>
            </StatusSlot>
            <StatusSlot $w={60}>
              <svg width={28} height={28}><defs><radialGradient id="si"><stop offset="0" stopColor="#e9f6ff" /><stop offset=".350" stopColor="#5a8ec8" /><stop offset=".700" stopColor="#6a2f78" /><stop offset="1" stopColor="#1b2440" /></radialGradient></defs><C x={14} y={14} r={14} c="url(#si)" /><path d="M3 18Q14 8 25 17M14 3Q12 14 18 25" stroke="#fff" strokeOpacity={0.800} fill="none" /></svg>
            </StatusSlot>
            <MenuItem $w={250} $ls={-0.2}>Sat 20 Mar  9:48 AM</MenuItem>
          </MenuGroup>
        </MenuBar>

        <Window>
          <TitleRow>
            <Lights>
              <Light $c="#ee6a5f" $e="#d55549"><i /></Light><Light $c="#f5bf4f" $e="#dca53a" /><Light $c="#61c554" $e="#4fa943" />
            </Lights>
            <Title>
              <svg width={28} height={32}><F d="M0 0H20L28 8V32H0Z" c="#3b4f78" /><F d="M20 0L28 8H20Z" c="#5b6c90" /><F d="M0 18H10L28 30V32H0Z" c="#94804f" /><P d="M9 0V18M0 11H28" c="#8e9bb2" w={1.600} /><rect x={6.500} y={8.500} width={5} height={5} fill="#3b4f78" stroke="#8e9bb2" /></svg>
              Autodesk AutoCAD 2021<span>SHEET 6.dwg</span>
            </Title>
            <Account>
              <svg width={30} height={32} viewBox="0 0 30 32"><ellipse cx={15} cy={10.500} rx={7.500} ry={9.500} fill="#7d95e8" stroke="#000" strokeWidth={1.600} /><path d="M2 30Q3 22 11 20H19Q27 22 28 30Z" fill="#7d95e8" stroke="#000" strokeWidth={1.600} /></svg>
              parthjohri_e...<Tri w={12} h={8} />
            </Account>
          </TitleRow>
          <Toolbar>
            {toolbarGroups.map((g, i) => (
              <ToolGroup key={i}>{g.map(n => <svg key={n} viewBox="0 0 32 32">{bar[n]}</svg>)}</ToolGroup>
            ))}
          </Toolbar>
          <Body>
            <Palette>
              <PaletteTabs>
                <PaletteTab $kind="on">Drafting</PaletteTab><PaletteTab $kind="off">Modeling</PaletteTab>
                <PaletteTab $kind="fold"><svg width={14} height={12}><P d="M6 1L1 6L6 11M13 1L8 6L13 11" c="#9fa2a8" w={1.500} /></svg></PaletteTab>
              </PaletteTabs>
              <PaletteScroll>
                {sections.map((s, i) => (
                  <Section key={s.title} $h={(s.sub ? 192 : 144) - (i === 0 ? 2 : 0)}>
                    <SectionHead $first={i === 0}>
                      <svg width={17} height={9}><F d="M0 0H17L8.500 9Z" c="#f4f5f7" /></svg><span>{s.title}</span><Gear />
                    </SectionHead>
                    <ToolGrid>{s.main.map((t, k) => <Tool key={k} s={t} />)}</ToolGrid>
                    {s.sub && <SubGrid>{s.sub.map((t, k) => <Tool key={k} s={t} />)}</SubGrid>}
                  </Section>
                ))}
              </PaletteScroll>
              <PaletteFoot>
                <svg width={23} height={22}><P d="M11.500 0V22M0 11H23" c="#d4d5d7" /></svg>
                <svg width={28} height={22}><P d="M5 1.500H27M5 8H27M5 20.500H27" c="#d4d5d7" /><P d="M0 14H19" c="#d4d5d7" w={3} /><F d="M20 15L23.500 11L27 15Z" c="#d4d5d7" /></svg>
              </PaletteFoot>
            </Palette>

            <Workspace>
              <WorkRow>
                <Center>
                  <DocTabs>
                    <DocTab $w={48}><svg width={30} height={28}><R x={1} y={0} w={14} h={14} c={LB} /><R x={17} y={2} w={12} h={12} c={G} /><R x={3} y={16} w={12} h={12} c={G} /><R x={17} y={16} w={12} h={12} c={G} /></svg></DocTab>
                    <DocTab $w={46}><svg width={30} height={24}><P d="M17 0V24M5 12H29" c="#c9cbce" w={1.800} /></svg></DocTab>
                    <DocTab $w={258} $ls={0}>Drawing1*</DocTab>
                    <DocTab $w={474} $ls={-0.14}>PARTH JOHRI 2K20:B17:33 EG SHEET 5*</DocTab>
                    <DocTab $w={258} $on $ls={0}>SHEET 6*</DocTab>
                  </DocTabs>
                  <Canvas>
                    <Drawing />
                    <CommandBar>
                      <svg width={44} height={20}><P d="M2 3L11 8L2 13M14 17H26" c="#c9cbce" w={1.800} /><F d="M33 8H44L38.500 13.500Z" c="#c9cbce" /></svg>
                      <span>Type a command</span>
                      <svg width={37} height={8}><F d="M0 7H11L5.500 1Z" c="#a3a6ab" /></svg>
                      <svg width={28} height={28}><P d="M9 9H2V26H25V9H18" c={G} w={2.200} /><P d="M13.500 19V6" c={BL} w={2.200} /><F d="M13.500 0L8 7H19Z" c={BL} /></svg>
                    </CommandBar>
                  </Canvas>
                </Center>

                <Panel>
                  <PanelTabs>
                    <PanelTab $kind="on"><svg width={32} height={30}><g transform="scale(.900)"><Sheet y={1} /><SheetEdge y={8} /><SheetEdge y={15} /></g><C x={24} y={21} r={8.500} c={PANEL} /><C x={24} y={21} r={7} c={G} /><R x={23} y={20} w={2} h={5} c={PANEL} /><R x={23} y={16} w={2} h={2} c={PANEL} /></svg></PanelTab>
                    <PanelTab $kind="off"><svg width={32} height={30}><PageShape x={1} y={6} w={30} h={22} /><rect x={-1} y={-1} width={14} height={20} rx={7} fill="#30333e" /><P d="M8 6V12A2 2 0 0 1 4 12V5A3.500 3.500 0 0 1 11 5V13A4 4 0 0 1 2 13V3" w={1.800} /></svg></PanelTab>
                    <PanelTab $kind="off"><svg width={28} height={27}><R x={0} y={0} w={28} h={27} c={G} /><R x={0} y={0} w={28} h={7} c="#a6a6a8" /><R x={2} y={2} w={3} c="#333" /><g fill="#30333e">{[5, 12, 19].map(x => [9, 16].map(y => <rect key={`${x}${y}`} x={x} y={y} width={4.500} height={5} />))}</g><P d="M4 23.500H24" c="#7a7b80" w={1.600} /></svg></PanelTab>
                    <PanelTab $kind="off" />
                    <PanelTab $kind="fold"><svg width={14} height={12}><P d="M1 1L6 6L1 11M8 1L13 6L8 11" c="#9fa2a8" w={1.500} /></svg></PanelTab>
                  </PanelTabs>
                  <LayersBox>
                    <PanelHead>Layers<DockOut /></PanelHead>
                    <LayerTools>
                      {Object.keys(layers).map(k => <svg key={k} width={32} height={32} viewBox="0 0 32 32">{layers[k]}</svg>)}
                    </LayerTools>
                    <LayerCombo $h={49} $pl={18}>
                      <svg width={18} height={18}><C x={9} y={9} r={8} c={G} /></svg>
                      <svg width={16} height={22}><R x={1} y={10} w={14} h={11} c="#666f82" /><P d="M4 10V6A4 4 0 0 1 12 6V10" c="#666f82" /></svg>
                      <svg width={18} height={18}><P d="M9 0V18M0 9H18M3 3L15 15M15 3L3 15" c="#6a7386" /><C x={9} y={9} r={4} s="#6a7386" w={1.500} /></svg>
                      <svg width={24} height={18}><rect x={1} y={1} width={16} height={16} fill="#fff" stroke="#000" strokeWidth={2} /></svg>
                      <span>0</span><Tri h={8} />
                    </LayerCombo>
                    <StateCombo $h={49}>Unsaved Layer State<Tri h={8} /></StateCombo>
                    <ShowList><svg width={10} height={18}><P d="M1 1L8 9L1 17" c="#b9bcc1" /></svg>Show Layer List</ShowList>
                  </LayersBox>
                  <PropHead>
                    <PropTitle>Properties</PropTitle>
                    <Segmented><span>All</span><span>My</span></Segmented>
                    <HeadIcon $ml={19}><svg width={30} height={26}><P d="M15 23H2V1H20V8M6 6H16M6 10H16M6 14H14M6 18H12" /><path d="M12 18L22 8L28 14L18 25L11 26Z" fill={G} stroke={PANEL} strokeWidth={1.500} /></svg></HeadIcon>
                    <HeadIcon $ml={20}><DockOut flip /></HeadIcon>
                  </PropHead>
                  <SpaceCombo $h={43} $pl={12} $dim>Model Space<Tri c="#80868f" /></SpaceCombo>
                  <PropRows>
                    {rows.map(r => (
                      <PropRow key={r.l} $hover={r.kind === "hover"}>
                        <PropLabel>{r.l}</PropLabel>
                        <PropValue><Value r={r} /></PropValue>
                      </PropRow>
                    ))}
                  </PropRows>
                </Panel>
              </WorkRow>
              <StatusBar>
                <LayoutTab $w={121} $on>Model</LayoutTab>
                <LayoutTab $w={45}><svg width={24} height={24}><P d="M12 1V23M1 12H23" c="#d4d5d7" w={1.800} /></svg></LayoutTab>
                <LayoutTab $w={118}>Layout1</LayoutTab>
                <LayoutTab $w={118}>Layout2</LayoutTab>
                <Coords>5377.0735, 47.9292  , 0.0000</Coords>
                <Toggles>
                  {toggles.map(([on, g], i) => <Toggle key={i} $on={on}><svg width={40} height={40}>{g}</svg></Toggle>)}
                </Toggles>
                <ScalePick>
                  <ScaleText>1:1<Tri c="#c9cbce" h={8} /></ScaleText>
                  <svg width={32} height={34}><rect x={1} y={1} width={12} height={13} fill="none" stroke={G} strokeWidth={2} /><C x={24.500} y={13} r={6} s={G} /><P d="M13 19L20 31H6Z" /></svg>
                  <Gear s={32} c={G} hole="#3a4351" r={3.4} />
                </ScalePick>
              </StatusBar>
            </Workspace>
          </Body>
        </Window>
        <DockShelf>
          {dock.map((d, i) => d === "|" ? <DockSep key={i} /> : (
            <DockItem key={d.k} $run={d.run}><svg width={64} height={64} viewBox="0 0 64 64">{d.g}</svg></DockItem>
          ))}
        </DockShelf>
      </Desktop>
    </>
  );
}
